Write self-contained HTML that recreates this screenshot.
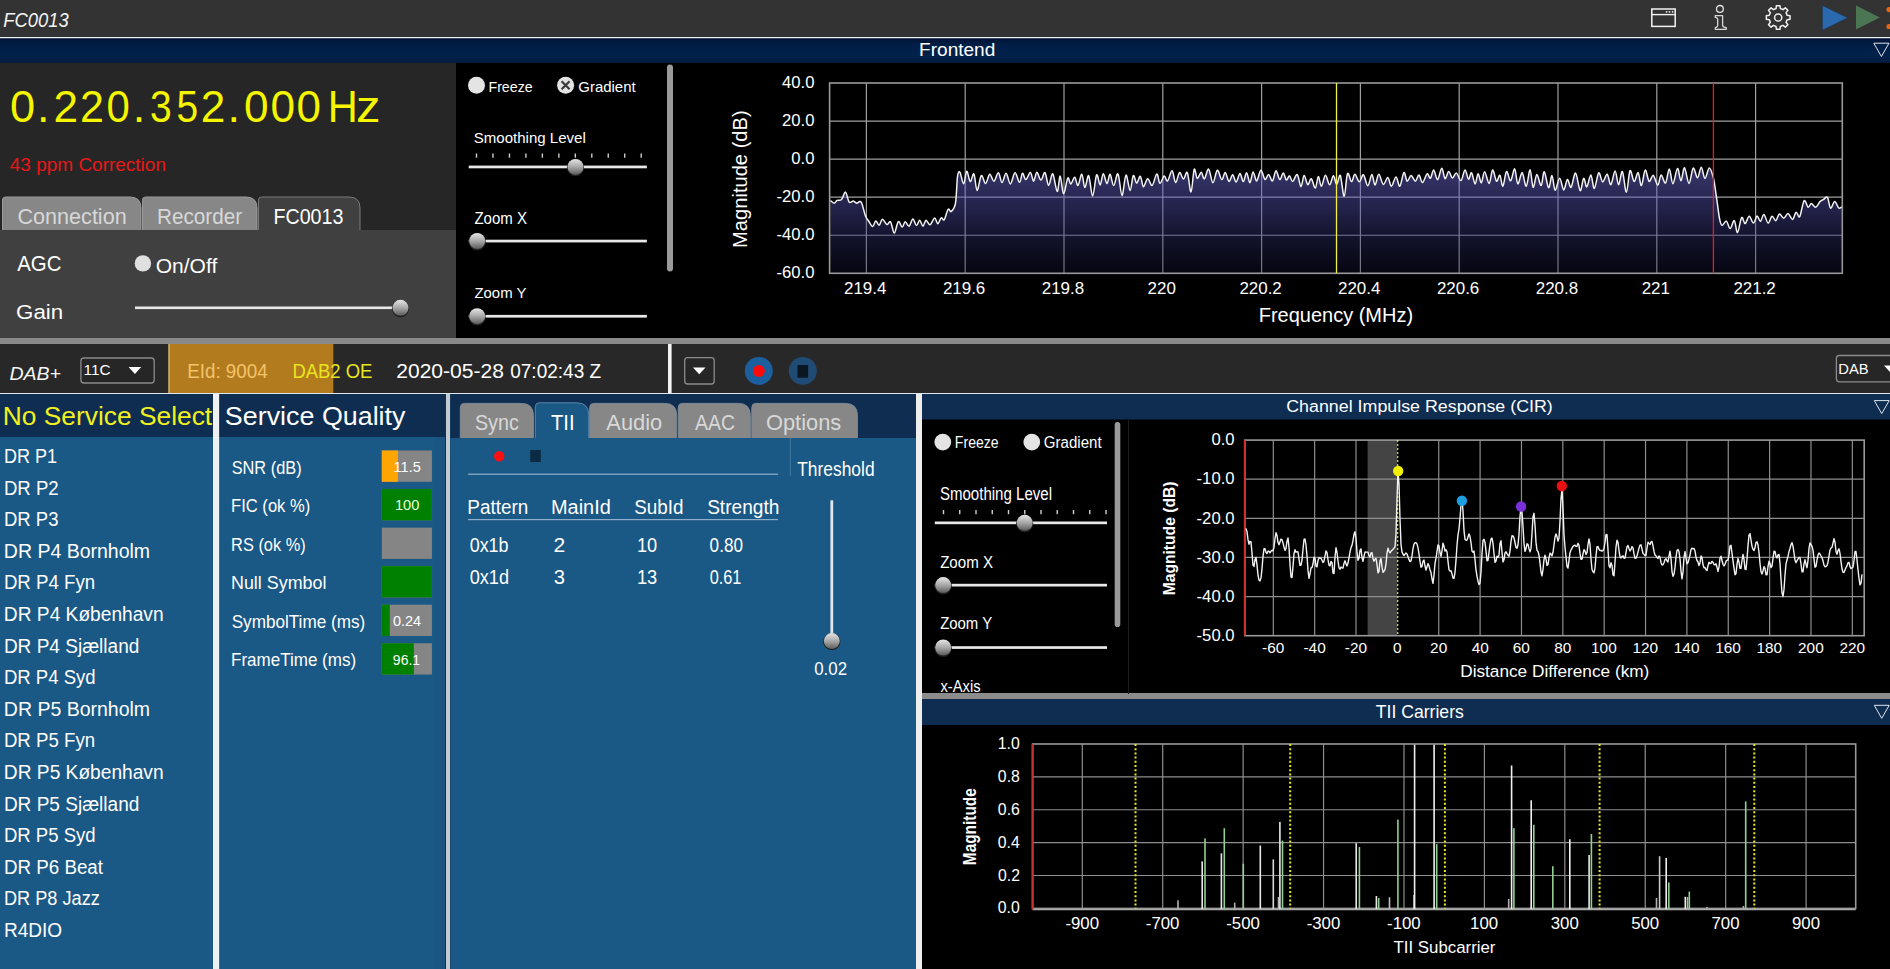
<!DOCTYPE html><html><head><meta charset="utf-8"><style>html,body{margin:0;padding:0;background:#000;overflow:hidden}svg{display:block}text{font-family:"Liberation Sans",sans-serif}</style></head><body><svg width="1890" height="969" viewBox="0 0 1890 969"><defs>
<linearGradient id="navy1" x1="0" y1="0" x2="0" y2="1"><stop offset="0" stop-color="#011536"/><stop offset="0.3" stop-color="#011f48"/><stop offset="0.8" stop-color="#01214b"/><stop offset="1" stop-color="#071a3a"/></linearGradient>
<linearGradient id="thumb" x1="0" y1="0" x2="0" y2="1"><stop offset="0" stop-color="#e6e6e6"/><stop offset="0.5" stop-color="#a8a8a8"/><stop offset="1" stop-color="#5a5a5a"/></linearGradient>
<linearGradient id="specfill" gradientUnits="userSpaceOnUse" x1="0" y1="172" x2="0" y2="273"><stop offset="0" stop-color="rgb(112,110,220)" stop-opacity="0.47"/><stop offset="0.35" stop-color="rgb(80,78,170)" stop-opacity="0.44"/><stop offset="1" stop-color="rgb(20,20,60)" stop-opacity="0.3"/></linearGradient>
</defs>
<rect x="0" y="0" width="1890" height="969" fill="#000"/>
<rect x="0" y="0" width="1890" height="37" fill="#333333"/>
<rect x="0" y="37" width="1890" height="1.5" fill="#e8f2fa"/>
<rect x="0" y="38.5" width="1890" height="24.5" fill="url(#navy1)"/>
<rect x="0" y="63" width="456" height="275" fill="#262626"/>
<rect x="456" y="63" width="1434" height="275" fill="#000"/>
<rect x="0" y="230" width="456" height="108" fill="#404040"/>
<rect x="0" y="338" width="1890" height="6" fill="#8a8a8a"/>
<rect x="0" y="344" width="1890" height="49" fill="#282828"/>
<rect x="0" y="393" width="1890" height="1.3" fill="#dfe8f0"/>
<rect x="0" y="394" width="213" height="575" fill="#1a5885"/>
<rect x="0" y="394" width="213" height="43" fill="#0f2d50"/>
<rect x="213" y="394" width="6.5" height="575" fill="#eef1f3"/>
<rect x="219.5" y="394" width="226" height="575" fill="#1a5885"/>
<rect x="219.5" y="394" width="226" height="43" fill="#0f2d50"/>
<rect x="435" y="437" width="10.5" height="532" fill="#1c5581"/>
<rect x="445.5" y="394" width="5" height="575" fill="#c2cad2"/>
<rect x="445" y="394" width="1" height="575" fill="#15304a"/>
<rect x="450" y="394" width="1" height="575" fill="#1a3a58"/>
<rect x="450.5" y="394" width="465.5" height="575" fill="#1a5885"/>
<rect x="450.5" y="394" width="465.5" height="44" fill="#0f2d50"/>
<rect x="916" y="394" width="6" height="575" fill="#eeeeec"/>
<rect x="922" y="394" width="968" height="300" fill="#000"/>
<rect x="922" y="394" width="968" height="25.5" fill="#0f2d50"/>
<rect x="922" y="693" width="968" height="6" fill="#8c8c8c"/>
<rect x="922" y="699" width="968" height="26" fill="#0f2d50"/>
<rect x="922" y="725" width="968" height="244" fill="#000"/>
<text x="3.15" y="26.80" font-size="19.71" fill="#f4f4f4" font-style="italic" textLength="65.49" lengthAdjust="spacingAndGlyphs">FC0013</text>
<rect x="1651.8" y="9" width="23.4" height="17.4" fill="none" stroke="#f2f2f2" stroke-width="1.5"/>
<line x1="1651.8" y1="14.6" x2="1675.2" y2="14.6" stroke="#f2f2f2" stroke-width="1.4"/>
<circle cx="1666.6" cy="11.8" r="0.9" fill="#f2f2f2"/>
<circle cx="1669.5" cy="11.8" r="0.9" fill="#f2f2f2"/>
<circle cx="1672.6" cy="11.8" r="0.9" fill="#f2f2f2"/>
<circle cx="1719.9" cy="8.9" r="3.4" fill="none" stroke="#e4e4e4" stroke-width="1.3"/>
<path d="M1715.3 15.6 L1722.6 15.6 L1722.6 25.4 Q1722.9 27.3 1726.3 27.7 L1726.3 29.3 L1715.3 29.3 L1715.3 27.7 Q1717.5 27.3 1717.7 25.4 L1717.7 19.2 Q1717.5 17.6 1715.3 17.4 Z" fill="none" stroke="#d8d8d8" stroke-width="1.3" stroke-linejoin="round"/>
<path d="M1776.41 5.63 L1779.99 5.63 L1780.39 8.56 L1783.01 9.66 L1785.32 7.84 L1787.86 10.38 L1786.07 12.73 L1787.15 15.35 L1790.07 15.71 L1790.07 19.29 L1787.14 19.69 L1786.04 22.31 L1787.86 24.62 L1785.32 27.16 L1782.97 25.37 L1780.35 26.45 L1779.99 29.37 L1776.41 29.37 L1776.01 26.44 L1773.39 25.34 L1771.08 27.16 L1768.54 24.62 L1770.33 22.27 L1769.25 19.65 L1766.33 19.29 L1766.33 15.71 L1769.26 15.31 L1770.36 12.69 L1768.54 10.38 L1771.08 7.84 L1773.43 9.63 L1776.05 8.55 Z" fill="none" stroke="#f0f0f0" stroke-width="1.5" stroke-linejoin="round"/>
<circle cx="1778.2" cy="17.5" r="3.6" fill="none" stroke="#f0f0f0" stroke-width="1.5"/>
<path d="M1822.4 5.4 L1847.8 17.8 L1822.4 30.2 Z" fill="#2a69ad" stroke="#1c3550" stroke-width="0.6"/>
<path d="M1856 5.6 L1879.8 17.6 L1856 29.6 Z" fill="#4c7653"/>
<circle cx="1889" cy="9.6" r="2.6" fill="#e2661a"/><circle cx="1889" cy="26.5" r="2.6" fill="#e2661a"/>
<text x="919.08" y="56.00" font-size="19.28" fill="#ffffff" textLength="76.21" lengthAdjust="spacingAndGlyphs">Frontend</text>
<path d="M1873.8 43.2 L1889 43.2 L1881.4 56.5 Z" fill="none" stroke="#e8eef4" stroke-width="0.95"/>
<text x="10.09" y="121.80" font-size="44.93" fill="#f5f500" textLength="25.14" lengthAdjust="spacingAndGlyphs">0</text>
<text x="36.96" y="121.80" font-size="44.93" fill="#f5f500">.</text>
<text x="53.59" y="121.80" font-size="44.93" fill="#f5f500" textLength="24.57" lengthAdjust="spacingAndGlyphs">2</text>
<text x="80.05" y="121.80" font-size="44.93" fill="#f5f500" textLength="23.96" lengthAdjust="spacingAndGlyphs">2</text>
<text x="106.53" y="121.80" font-size="44.93" fill="#f5f500" textLength="23.29" lengthAdjust="spacingAndGlyphs">0</text>
<text x="132.66" y="121.80" font-size="44.93" fill="#f5f500">.</text>
<text x="150.04" y="121.80" font-size="44.93" fill="#f5f500" textLength="21.66" lengthAdjust="spacingAndGlyphs">3</text>
<text x="176.44" y="121.80" font-size="44.93" fill="#f5f500" textLength="21.66" lengthAdjust="spacingAndGlyphs">5</text>
<text x="200.69" y="121.80" font-size="44.93" fill="#f5f500" textLength="24.57" lengthAdjust="spacingAndGlyphs">2</text>
<text x="227.46" y="121.80" font-size="44.93" fill="#f5f500">.</text>
<text x="244.03" y="121.80" font-size="44.93" fill="#f5f500" textLength="24.56" lengthAdjust="spacingAndGlyphs">0</text>
<text x="270.43" y="121.80" font-size="44.93" fill="#f5f500" textLength="24.56" lengthAdjust="spacingAndGlyphs">0</text>
<text x="296.44" y="121.80" font-size="44.93" fill="#f5f500" textLength="24.45" lengthAdjust="spacingAndGlyphs">0</text>
<text x="327.67" y="121.80" font-size="44.93" fill="#f5f500" textLength="30.05" lengthAdjust="spacingAndGlyphs">H</text>
<text x="356.04" y="121.80" font-size="44.93" fill="#f5f500" textLength="24.51" lengthAdjust="spacingAndGlyphs">z</text>
<text x="9.82" y="171.00" font-size="17.54" fill="#e81818" textLength="156.14" lengthAdjust="spacingAndGlyphs">43 ppm Correction</text>
<path d="M2.5 231 L2.5 200 Q2.5 197 5.5 197 L130 197 Q141 197 141 208 L141 231 Z" fill="#878787" stroke="#9a9a9a" stroke-width="1"/>
<path d="M142.5 231 L142.5 200 Q142.5 197 145.5 197 L246 197 Q257 197 257 208 L257 231 Z" fill="#878787" stroke="#9a9a9a" stroke-width="1"/>
<path d="M258.5 231 L258.5 200 Q258.5 197 261.5 197 L349 197 Q360 197 360 208 L360 231 Z" fill="#404040" stroke="#7a7a7a" stroke-width="1"/>
<rect x="0" y="230" width="456" height="108" fill="#404040"/>
<text x="17.52" y="224.30" font-size="22.75" fill="#d8d8d8" textLength="109.16" lengthAdjust="spacingAndGlyphs">Connection</text>
<text x="156.94" y="224.30" font-size="22.75" fill="#d8d8d8" textLength="85.23" lengthAdjust="spacingAndGlyphs">Recorder</text>
<text x="273.43" y="224.30" font-size="22.75" fill="#ffffff" textLength="70.02" lengthAdjust="spacingAndGlyphs">FC0013</text>
<text x="17.20" y="271.20" font-size="21.16" fill="#ffffff" textLength="44.26" lengthAdjust="spacingAndGlyphs">AGC</text>
<circle cx="142.9" cy="263.4" r="8.2" fill="#e0e0e0"/>
<text x="155.65" y="272.60" font-size="20.43" fill="#ffffff" textLength="61.59" lengthAdjust="spacingAndGlyphs">On/Off</text>
<text x="16.08" y="319.20" font-size="19.86" fill="#ffffff" textLength="47.12" lengthAdjust="spacingAndGlyphs">Gain</text>
<rect x="135" y="306.5" width="266" height="2.6" fill="#e8e8e8"/>
<circle cx="400.5" cy="308.6" r="8.6" fill="#202020"/>
<circle cx="400.5" cy="307.8" r="8" fill="url(#thumb)"/>
<circle cx="476.5" cy="85.3" r="8.5" fill="#e4e4e4"/>
<text x="488.46" y="92.00" font-size="15.36" fill="#ffffff" textLength="44.21" lengthAdjust="spacingAndGlyphs">Freeze</text>
<circle cx="565.6" cy="85.3" r="8.5" fill="#e4e4e4"/>
<path d="M561.6 81.3 L569.6 89.3 M569.6 81.3 L561.6 89.3" stroke="#3c3c3c" stroke-width="2.2"/>
<text x="578.25" y="92.00" font-size="15.36" fill="#ffffff" textLength="57.43" lengthAdjust="spacingAndGlyphs">Gradient</text>
<text x="473.72" y="142.90" font-size="15.36" fill="#ffffff" textLength="112.02" lengthAdjust="spacingAndGlyphs">Smoothing Level</text>
<rect x="475.8" y="153.5" width="1.4" height="4.2" fill="#cfcfcf"/>
<rect x="492.27000000000004" y="153.5" width="1.4" height="4.2" fill="#cfcfcf"/>
<rect x="508.74" y="153.5" width="1.4" height="4.2" fill="#cfcfcf"/>
<rect x="525.2099999999999" y="153.5" width="1.4" height="4.2" fill="#cfcfcf"/>
<rect x="541.68" y="153.5" width="1.4" height="4.2" fill="#cfcfcf"/>
<rect x="558.15" y="153.5" width="1.4" height="4.2" fill="#cfcfcf"/>
<rect x="574.62" y="153.5" width="1.4" height="4.2" fill="#cfcfcf"/>
<rect x="591.09" y="153.5" width="1.4" height="4.2" fill="#cfcfcf"/>
<rect x="607.56" y="153.5" width="1.4" height="4.2" fill="#cfcfcf"/>
<rect x="624.03" y="153.5" width="1.4" height="4.2" fill="#cfcfcf"/>
<rect x="640.5" y="153.5" width="1.4" height="4.2" fill="#cfcfcf"/>
<rect x="468.7" y="165.6" width="178.2" height="2.7" fill="#e8e8e8"/>
<circle cx="575.5" cy="167.70000000000002" r="8.6" fill="#202020"/>
<circle cx="575.5" cy="166.9" r="8" fill="url(#thumb)"/>
<text x="474.45" y="223.50" font-size="16.23" fill="#ffffff" textLength="52.57" lengthAdjust="spacingAndGlyphs">Zoom X</text>
<rect x="468.7" y="239.7" width="178.2" height="2.7" fill="#e8e8e8"/>
<circle cx="477.2" cy="241.8" r="8.6" fill="#202020"/>
<circle cx="477.2" cy="241" r="8" fill="url(#thumb)"/>
<text x="474.45" y="298.00" font-size="15.36" fill="#ffffff" textLength="51.99" lengthAdjust="spacingAndGlyphs">Zoom Y</text>
<rect x="468.7" y="314.9" width="178.2" height="2.7" fill="#e8e8e8"/>
<circle cx="477.2" cy="317.0" r="8.6" fill="#202020"/>
<circle cx="477.2" cy="316.2" r="8" fill="url(#thumb)"/>
<rect x="667" y="64.5" width="6" height="207" rx="3" fill="#9a9a9a"/>
<line x1="866.4" y1="83" x2="866.4" y2="273.3" stroke="#a0a0a0" stroke-width="1.2"/>
<line x1="965.1999999999999" y1="83" x2="965.1999999999999" y2="273.3" stroke="#a0a0a0" stroke-width="1.2"/>
<line x1="1064.0" y1="83" x2="1064.0" y2="273.3" stroke="#a0a0a0" stroke-width="1.2"/>
<line x1="1162.8" y1="83" x2="1162.8" y2="273.3" stroke="#a0a0a0" stroke-width="1.2"/>
<line x1="1261.6" y1="83" x2="1261.6" y2="273.3" stroke="#a0a0a0" stroke-width="1.2"/>
<line x1="1360.4" y1="83" x2="1360.4" y2="273.3" stroke="#a0a0a0" stroke-width="1.2"/>
<line x1="1459.1999999999998" y1="83" x2="1459.1999999999998" y2="273.3" stroke="#a0a0a0" stroke-width="1.2"/>
<line x1="1558.0" y1="83" x2="1558.0" y2="273.3" stroke="#a0a0a0" stroke-width="1.2"/>
<line x1="1656.8" y1="83" x2="1656.8" y2="273.3" stroke="#a0a0a0" stroke-width="1.2"/>
<line x1="1755.6" y1="83" x2="1755.6" y2="273.3" stroke="#a0a0a0" stroke-width="1.2"/>
<line x1="829.6" y1="121.06" x2="1842.3" y2="121.06" stroke="#a0a0a0" stroke-width="1.2"/>
<line x1="829.6" y1="159.12" x2="1842.3" y2="159.12" stroke="#a0a0a0" stroke-width="1.2"/>
<line x1="829.6" y1="197.18" x2="1842.3" y2="197.18" stroke="#a0a0a0" stroke-width="1.2"/>
<line x1="829.6" y1="235.24" x2="1842.3" y2="235.24" stroke="#a0a0a0" stroke-width="1.2"/>
<path d="M830.5 200.6 C831.1 201.0 833.0 203.3 834.1 203.2 C835.2 203.2 835.9 201.1 837.1 200.4 C838.3 199.8 840.1 200.9 841.5 199.5 C842.9 198.1 844.3 191.7 845.5 192.1 C846.8 192.5 847.8 200.5 849.1 202.0 C850.4 203.5 852.0 200.9 853.3 201.1 C854.6 201.3 855.4 203.0 856.7 203.2 C858.0 203.4 859.7 200.0 861.2 202.1 C862.6 204.2 864.2 212.7 865.4 215.8 C866.6 219.0 867.4 219.3 868.6 221.0 C869.8 222.8 871.4 226.6 872.6 226.6 C873.8 226.6 874.7 221.3 875.8 221.1 C876.9 220.9 878.0 225.5 879.1 225.2 C880.2 224.9 881.1 219.3 882.4 219.2 C883.7 219.1 885.5 224.1 886.8 224.5 C888.2 225.0 889.4 220.4 890.6 221.9 C891.9 223.3 893.0 233.1 894.3 233.1 C895.6 233.0 896.9 222.6 898.3 221.6 C899.6 220.6 901.0 227.1 902.2 227.1 C903.3 227.1 904.1 221.8 905.2 221.7 C906.3 221.6 907.8 226.8 909.1 226.3 C910.3 225.9 911.6 219.3 912.9 219.1 C914.1 219.0 915.4 225.4 916.5 225.6 C917.7 225.8 918.6 220.1 919.7 220.2 C920.8 220.3 921.9 226.2 923.0 226.2 C924.0 226.2 924.9 220.5 926.0 220.2 C927.2 220.0 928.6 225.2 930.0 224.8 C931.4 224.5 933.3 218.3 934.6 218.1 C935.9 217.9 936.7 223.7 937.8 223.7 C938.9 223.6 940.1 218.4 941.2 217.8 C942.3 217.1 943.1 221.1 944.2 219.7 C945.4 218.3 947.0 210.6 948.2 209.3 C949.4 207.9 950.1 212.6 951.3 211.5 C952.5 210.5 954.5 209.0 955.5 203.2 C956.5 197.3 956.8 181.6 957.5 176.5 C958.2 171.4 959.0 171.2 960.0 172.4 C961.0 173.7 962.5 184.0 963.6 183.8 C964.8 183.6 965.6 171.6 966.7 171.2 C967.8 170.8 969.0 181.0 970.2 181.5 C971.4 182.0 972.8 172.5 973.9 174.0 C975.1 175.5 975.8 190.1 977.1 190.4 C978.3 190.7 979.9 176.7 981.3 175.6 C982.7 174.5 984.2 183.8 985.6 183.6 C987.0 183.4 988.3 174.6 989.7 174.2 C991.1 173.8 992.4 181.4 993.9 181.2 C995.3 181.0 997.1 172.5 998.4 172.8 C999.8 173.0 1000.7 182.6 1002.0 182.6 C1003.3 182.7 1004.7 173.0 1006.1 173.2 C1007.5 173.4 1008.9 184.0 1010.4 183.9 C1011.9 183.8 1013.5 172.9 1015.0 172.7 C1016.5 172.4 1018.2 182.2 1019.5 182.3 C1020.8 182.4 1021.5 173.7 1022.5 173.3 C1023.6 172.8 1024.5 179.8 1025.9 179.6 C1027.2 179.5 1029.1 172.1 1030.4 172.4 C1031.7 172.7 1032.6 181.3 1033.6 181.3 C1034.7 181.3 1035.6 172.5 1036.8 172.3 C1038.0 172.1 1039.5 179.9 1040.9 180.0 C1042.3 180.1 1043.7 171.7 1045.0 172.6 C1046.3 173.6 1047.3 185.2 1048.6 185.4 C1049.9 185.6 1051.3 172.9 1052.8 173.9 C1054.2 174.9 1055.9 191.0 1057.2 191.4 C1058.4 191.8 1059.2 175.7 1060.2 176.1 C1061.3 176.5 1062.3 193.4 1063.5 193.7 C1064.8 194.0 1066.6 179.7 1067.8 178.1 C1069.0 176.5 1069.6 184.2 1070.8 184.1 C1071.9 184.0 1073.5 177.1 1074.7 177.3 C1075.9 177.5 1076.8 185.9 1078.0 185.4 C1079.2 184.9 1080.7 173.8 1081.8 174.2 C1083.0 174.5 1083.7 187.2 1084.9 187.5 C1086.0 187.7 1087.5 174.2 1088.7 175.7 C1090.0 177.1 1091.3 196.2 1092.6 196.1 C1093.9 196.0 1095.4 176.8 1096.6 174.9 C1097.9 173.1 1099.0 185.1 1100.1 185.0 C1101.2 184.8 1102.1 174.0 1103.3 173.8 C1104.4 173.6 1105.9 183.5 1107.0 183.6 C1108.1 183.7 1109.0 173.9 1110.1 174.2 C1111.2 174.6 1112.4 185.7 1113.7 185.6 C1115.0 185.6 1116.6 172.3 1118.0 173.9 C1119.4 175.6 1120.7 195.4 1122.0 195.6 C1123.3 195.8 1124.6 175.9 1126.0 175.1 C1127.3 174.2 1128.8 190.3 1130.0 190.4 C1131.3 190.5 1132.2 176.8 1133.3 175.6 C1134.4 174.4 1135.5 183.0 1136.6 183.1 C1137.8 183.2 1139.2 175.7 1140.4 176.3 C1141.5 176.9 1142.2 186.3 1143.4 186.8 C1144.6 187.2 1146.2 179.0 1147.7 178.8 C1149.1 178.6 1150.7 186.2 1152.2 185.4 C1153.7 184.6 1155.5 174.3 1156.8 173.9 C1158.1 173.6 1158.7 183.0 1160.0 183.3 C1161.2 183.7 1162.9 176.4 1164.2 176.0 C1165.5 175.6 1166.2 181.8 1167.6 180.9 C1168.9 180.0 1170.7 170.5 1172.1 170.8 C1173.4 171.1 1174.4 182.3 1175.6 182.6 C1176.9 182.9 1178.2 173.2 1179.5 172.6 C1180.8 172.0 1182.2 179.1 1183.5 179.0 C1184.8 179.0 1186.1 170.4 1187.3 172.6 C1188.6 174.7 1189.9 192.5 1191.0 191.9 C1192.2 191.4 1193.2 171.5 1194.2 169.3 C1195.2 167.0 1196.1 178.0 1197.3 178.5 C1198.5 179.0 1200.1 172.2 1201.3 172.3 C1202.4 172.4 1203.1 179.4 1204.4 178.9 C1205.6 178.4 1207.2 168.5 1208.6 169.1 C1210.1 169.8 1211.4 182.6 1212.9 182.8 C1214.3 183.0 1215.8 170.8 1217.3 170.2 C1218.8 169.7 1220.5 179.3 1221.8 179.6 C1223.2 180.0 1224.0 172.2 1225.2 172.5 C1226.4 172.8 1227.8 181.0 1229.0 181.4 C1230.3 181.8 1231.5 174.7 1232.7 174.8 C1233.8 174.9 1234.9 182.3 1236.1 182.1 C1237.3 181.9 1238.8 173.7 1240.0 173.6 C1241.2 173.5 1242.2 181.7 1243.3 181.6 C1244.4 181.5 1245.5 172.6 1246.6 172.8 C1247.7 173.0 1248.8 182.9 1249.9 182.7 C1251.0 182.6 1252.0 172.2 1253.1 171.9 C1254.2 171.7 1255.4 181.3 1256.6 181.0 C1257.9 180.7 1259.5 170.5 1260.9 170.2 C1262.3 170.0 1263.8 178.8 1265.0 179.5 C1266.3 180.2 1267.3 174.1 1268.6 174.4 C1269.8 174.6 1271.2 181.5 1272.5 180.9 C1273.7 180.2 1274.8 170.9 1276.0 170.7 C1277.2 170.4 1278.6 179.2 1279.8 179.6 C1281.0 179.9 1282.2 172.8 1283.3 172.9 C1284.4 173.0 1285.3 179.5 1286.4 180.0 C1287.4 180.5 1288.4 175.5 1289.4 175.7 C1290.5 176.0 1291.4 181.6 1292.7 181.4 C1294.0 181.2 1295.9 173.7 1297.3 174.6 C1298.7 175.5 1299.8 186.6 1300.9 186.7 C1302.1 186.9 1303.0 175.8 1304.1 175.4 C1305.3 175.1 1306.5 184.0 1307.7 184.6 C1308.9 185.1 1310.1 178.1 1311.3 178.7 C1312.6 179.3 1314.1 188.5 1315.3 188.1 C1316.5 187.8 1317.3 176.9 1318.3 176.6 C1319.3 176.3 1320.2 186.5 1321.4 186.3 C1322.5 186.1 1324.1 175.5 1325.4 175.3 C1326.8 175.1 1328.3 184.7 1329.6 184.8 C1331.0 184.9 1332.2 175.9 1333.4 175.8 C1334.6 175.7 1335.6 184.4 1336.7 184.4 C1337.9 184.3 1339.1 173.4 1340.3 175.4 C1341.5 177.4 1343.0 196.6 1344.2 196.3 C1345.4 196.1 1346.2 176.2 1347.5 173.7 C1348.7 171.3 1350.3 181.5 1351.5 181.6 C1352.8 181.7 1353.6 174.3 1354.9 174.3 C1356.2 174.3 1357.9 181.8 1359.3 181.8 C1360.7 181.9 1362.0 174.0 1363.4 174.7 C1364.8 175.3 1366.4 185.8 1367.8 185.8 C1369.2 185.7 1370.7 174.7 1371.9 174.6 C1373.1 174.5 1373.9 185.2 1375.0 185.1 C1376.2 185.1 1377.4 174.4 1378.8 174.3 C1380.1 174.1 1381.8 183.8 1383.3 184.4 C1384.8 184.9 1386.5 177.1 1387.8 177.4 C1389.2 177.7 1390.1 186.3 1391.4 186.3 C1392.8 186.2 1394.6 176.9 1396.0 176.9 C1397.4 176.9 1398.5 187.0 1399.8 186.2 C1401.1 185.5 1402.7 173.4 1403.9 172.5 C1405.1 171.7 1406.0 180.7 1407.2 181.2 C1408.4 181.7 1409.7 175.5 1411.1 175.5 C1412.5 175.5 1414.1 181.3 1415.4 181.2 C1416.7 181.1 1417.7 174.9 1418.9 175.1 C1420.1 175.3 1421.2 182.7 1422.5 182.5 C1423.9 182.3 1425.8 174.5 1427.1 173.8 C1428.4 173.1 1429.3 178.9 1430.4 178.2 C1431.5 177.6 1432.5 169.7 1433.7 169.9 C1434.9 170.2 1436.2 180.0 1437.5 179.7 C1438.9 179.5 1440.5 168.4 1441.8 168.2 C1443.0 168.0 1443.9 178.0 1445.0 178.6 C1446.2 179.1 1447.4 171.6 1448.7 171.5 C1449.9 171.4 1451.1 177.7 1452.4 178.0 C1453.7 178.2 1455.0 172.6 1456.5 173.1 C1457.9 173.5 1459.6 181.1 1461.0 180.6 C1462.4 180.1 1463.7 170.1 1465.0 169.9 C1466.2 169.6 1467.4 178.6 1468.5 179.1 C1469.6 179.6 1470.5 172.0 1471.6 172.8 C1472.7 173.6 1474.0 183.8 1475.1 184.0 C1476.2 184.1 1477.1 174.0 1478.1 173.8 C1479.2 173.6 1480.3 183.2 1481.3 182.9 C1482.4 182.5 1483.3 171.6 1484.6 171.7 C1485.9 171.8 1487.8 183.8 1489.1 183.5 C1490.5 183.2 1491.4 170.4 1492.6 170.0 C1493.9 169.6 1495.3 180.3 1496.5 181.2 C1497.7 182.1 1498.8 174.5 1499.9 175.3 C1500.9 176.2 1501.8 186.7 1502.9 186.1 C1504.0 185.5 1505.2 172.6 1506.5 171.7 C1507.8 170.8 1509.2 181.2 1510.6 180.8 C1512.0 180.3 1513.5 168.4 1514.7 168.9 C1515.9 169.4 1516.6 183.2 1517.8 183.8 C1519.1 184.5 1520.8 172.3 1522.2 172.7 C1523.6 173.1 1524.9 186.7 1526.2 186.2 C1527.6 185.7 1528.9 169.6 1530.1 169.8 C1531.2 170.0 1532.0 186.6 1533.1 187.3 C1534.3 188.1 1535.5 174.8 1536.9 174.5 C1538.2 174.2 1539.9 186.0 1541.1 185.6 C1542.4 185.1 1543.0 171.4 1544.3 171.7 C1545.5 172.1 1547.3 187.0 1548.6 187.7 C1549.9 188.3 1550.9 175.2 1552.0 175.6 C1553.1 176.1 1553.9 189.9 1555.1 190.3 C1556.4 190.7 1558.2 178.2 1559.7 178.2 C1561.1 178.1 1562.4 189.7 1563.7 189.9 C1565.0 190.1 1566.1 180.0 1567.4 179.5 C1568.6 179.1 1569.7 188.3 1571.1 187.3 C1572.4 186.2 1574.1 172.5 1575.6 173.1 C1577.1 173.7 1578.8 189.8 1580.2 190.6 C1581.5 191.5 1582.5 179.0 1583.7 178.4 C1584.8 177.7 1585.7 187.5 1586.8 186.9 C1588.0 186.3 1589.6 174.7 1590.8 174.9 C1592.1 175.2 1593.0 188.7 1594.3 188.4 C1595.6 188.0 1597.3 174.0 1598.7 172.9 C1600.1 171.9 1601.3 181.8 1602.7 182.0 C1604.1 182.2 1605.8 173.8 1607.2 174.2 C1608.5 174.7 1609.6 185.3 1610.9 184.7 C1612.2 184.2 1613.8 171.0 1615.1 171.1 C1616.4 171.1 1617.4 184.8 1618.6 184.8 C1619.8 184.9 1621.1 170.3 1622.4 171.5 C1623.7 172.8 1625.1 192.5 1626.4 192.3 C1627.7 192.2 1628.7 172.5 1630.0 170.7 C1631.3 168.9 1632.8 181.3 1634.2 181.6 C1635.5 181.9 1636.9 172.0 1638.1 172.7 C1639.3 173.3 1640.2 186.0 1641.4 185.5 C1642.6 185.1 1643.9 170.8 1645.2 170.1 C1646.5 169.4 1647.8 180.5 1649.1 181.3 C1650.5 182.2 1651.8 174.7 1653.3 175.3 C1654.7 176.0 1656.5 185.2 1657.8 185.2 C1659.1 185.1 1659.8 175.4 1661.1 175.1 C1662.4 174.7 1664.1 184.0 1665.5 183.0 C1666.9 182.0 1668.1 168.9 1669.3 169.0 C1670.6 169.1 1671.5 183.8 1672.9 183.7 C1674.3 183.6 1676.1 168.9 1677.5 168.4 C1678.8 168.0 1679.8 180.9 1681.0 180.8 C1682.2 180.7 1683.2 167.3 1684.5 167.8 C1685.8 168.2 1687.5 183.4 1689.0 183.5 C1690.4 183.5 1691.8 169.1 1693.2 168.2 C1694.7 167.2 1696.2 178.0 1697.5 177.9 C1698.9 177.8 1700.0 167.2 1701.3 167.3 C1702.5 167.4 1703.6 178.3 1705.0 178.4 C1706.3 178.5 1707.9 167.9 1709.3 167.9 C1710.7 167.9 1712.3 173.5 1713.5 178.4 C1714.7 183.4 1715.5 190.8 1716.5 197.5 C1717.5 204.1 1718.6 213.7 1719.5 218.4 C1720.4 223.1 1720.9 225.0 1722.0 225.4 C1723.1 225.9 1725.0 220.6 1726.4 221.1 C1727.7 221.6 1728.8 228.6 1730.2 228.5 C1731.5 228.4 1733.1 219.9 1734.3 220.6 C1735.6 221.3 1736.2 233.1 1737.5 232.6 C1738.7 232.1 1740.4 219.1 1741.7 217.6 C1743.0 216.1 1743.8 223.9 1745.1 223.6 C1746.3 223.4 1747.8 216.3 1749.2 216.2 C1750.6 216.1 1752.1 223.0 1753.4 223.0 C1754.7 223.0 1755.9 216.4 1757.1 216.1 C1758.2 215.8 1759.4 221.7 1760.5 221.4 C1761.6 221.1 1762.6 214.1 1763.9 214.4 C1765.2 214.7 1766.7 222.8 1768.1 223.1 C1769.4 223.4 1770.7 216.6 1772.0 216.2 C1773.3 215.8 1774.6 221.1 1775.8 220.7 C1777.1 220.3 1778.1 214.4 1779.4 214.0 C1780.8 213.6 1782.3 218.3 1783.7 218.2 C1785.2 218.2 1786.6 213.4 1788.0 213.6 C1789.5 213.7 1791.2 219.6 1792.5 219.4 C1793.9 219.2 1794.9 212.7 1796.1 212.3 C1797.3 211.8 1798.4 218.5 1799.7 216.6 C1801.0 214.7 1802.7 202.3 1804.1 200.7 C1805.5 199.2 1806.9 206.7 1808.1 207.2 C1809.3 207.7 1810.1 203.6 1811.4 203.6 C1812.6 203.6 1814.2 207.5 1815.7 207.2 C1817.1 206.9 1818.7 202.9 1820.0 201.6 C1821.2 200.4 1822.1 200.4 1823.3 199.6 C1824.6 198.9 1826.2 195.9 1827.4 197.3 C1828.6 198.7 1829.3 207.3 1830.6 208.1 C1831.8 208.8 1833.3 201.5 1834.7 201.5 C1836.0 201.5 1837.5 207.0 1838.6 207.9 C1839.8 208.8 1841.2 207.1 1841.7 207.0 L1841.7 273.3 L830.5 273.3 Z" fill="url(#specfill)"/>
<rect x="829.6" y="83" width="1012.6999999999999" height="190.3" fill="none" stroke="#999" stroke-width="1.6"/>
<path d="M830.5 200.6 C831.1 201.0 833.0 203.3 834.1 203.2 C835.2 203.2 835.9 201.1 837.1 200.4 C838.3 199.8 840.1 200.9 841.5 199.5 C842.9 198.1 844.3 191.7 845.5 192.1 C846.8 192.5 847.8 200.5 849.1 202.0 C850.4 203.5 852.0 200.9 853.3 201.1 C854.6 201.3 855.4 203.0 856.7 203.2 C858.0 203.4 859.7 200.0 861.2 202.1 C862.6 204.2 864.2 212.7 865.4 215.8 C866.6 219.0 867.4 219.3 868.6 221.0 C869.8 222.8 871.4 226.6 872.6 226.6 C873.8 226.6 874.7 221.3 875.8 221.1 C876.9 220.9 878.0 225.5 879.1 225.2 C880.2 224.9 881.1 219.3 882.4 219.2 C883.7 219.1 885.5 224.1 886.8 224.5 C888.2 225.0 889.4 220.4 890.6 221.9 C891.9 223.3 893.0 233.1 894.3 233.1 C895.6 233.0 896.9 222.6 898.3 221.6 C899.6 220.6 901.0 227.1 902.2 227.1 C903.3 227.1 904.1 221.8 905.2 221.7 C906.3 221.6 907.8 226.8 909.1 226.3 C910.3 225.9 911.6 219.3 912.9 219.1 C914.1 219.0 915.4 225.4 916.5 225.6 C917.7 225.8 918.6 220.1 919.7 220.2 C920.8 220.3 921.9 226.2 923.0 226.2 C924.0 226.2 924.9 220.5 926.0 220.2 C927.2 220.0 928.6 225.2 930.0 224.8 C931.4 224.5 933.3 218.3 934.6 218.1 C935.9 217.9 936.7 223.7 937.8 223.7 C938.9 223.6 940.1 218.4 941.2 217.8 C942.3 217.1 943.1 221.1 944.2 219.7 C945.4 218.3 947.0 210.6 948.2 209.3 C949.4 207.9 950.1 212.6 951.3 211.5 C952.5 210.5 954.5 209.0 955.5 203.2 C956.5 197.3 956.8 181.6 957.5 176.5 C958.2 171.4 959.0 171.2 960.0 172.4 C961.0 173.7 962.5 184.0 963.6 183.8 C964.8 183.6 965.6 171.6 966.7 171.2 C967.8 170.8 969.0 181.0 970.2 181.5 C971.4 182.0 972.8 172.5 973.9 174.0 C975.1 175.5 975.8 190.1 977.1 190.4 C978.3 190.7 979.9 176.7 981.3 175.6 C982.7 174.5 984.2 183.8 985.6 183.6 C987.0 183.4 988.3 174.6 989.7 174.2 C991.1 173.8 992.4 181.4 993.9 181.2 C995.3 181.0 997.1 172.5 998.4 172.8 C999.8 173.0 1000.7 182.6 1002.0 182.6 C1003.3 182.7 1004.7 173.0 1006.1 173.2 C1007.5 173.4 1008.9 184.0 1010.4 183.9 C1011.9 183.8 1013.5 172.9 1015.0 172.7 C1016.5 172.4 1018.2 182.2 1019.5 182.3 C1020.8 182.4 1021.5 173.7 1022.5 173.3 C1023.6 172.8 1024.5 179.8 1025.9 179.6 C1027.2 179.5 1029.1 172.1 1030.4 172.4 C1031.7 172.7 1032.6 181.3 1033.6 181.3 C1034.7 181.3 1035.6 172.5 1036.8 172.3 C1038.0 172.1 1039.5 179.9 1040.9 180.0 C1042.3 180.1 1043.7 171.7 1045.0 172.6 C1046.3 173.6 1047.3 185.2 1048.6 185.4 C1049.9 185.6 1051.3 172.9 1052.8 173.9 C1054.2 174.9 1055.9 191.0 1057.2 191.4 C1058.4 191.8 1059.2 175.7 1060.2 176.1 C1061.3 176.5 1062.3 193.4 1063.5 193.7 C1064.8 194.0 1066.6 179.7 1067.8 178.1 C1069.0 176.5 1069.6 184.2 1070.8 184.1 C1071.9 184.0 1073.5 177.1 1074.7 177.3 C1075.9 177.5 1076.8 185.9 1078.0 185.4 C1079.2 184.9 1080.7 173.8 1081.8 174.2 C1083.0 174.5 1083.7 187.2 1084.9 187.5 C1086.0 187.7 1087.5 174.2 1088.7 175.7 C1090.0 177.1 1091.3 196.2 1092.6 196.1 C1093.9 196.0 1095.4 176.8 1096.6 174.9 C1097.9 173.1 1099.0 185.1 1100.1 185.0 C1101.2 184.8 1102.1 174.0 1103.3 173.8 C1104.4 173.6 1105.9 183.5 1107.0 183.6 C1108.1 183.7 1109.0 173.9 1110.1 174.2 C1111.2 174.6 1112.4 185.7 1113.7 185.6 C1115.0 185.6 1116.6 172.3 1118.0 173.9 C1119.4 175.6 1120.7 195.4 1122.0 195.6 C1123.3 195.8 1124.6 175.9 1126.0 175.1 C1127.3 174.2 1128.8 190.3 1130.0 190.4 C1131.3 190.5 1132.2 176.8 1133.3 175.6 C1134.4 174.4 1135.5 183.0 1136.6 183.1 C1137.8 183.2 1139.2 175.7 1140.4 176.3 C1141.5 176.9 1142.2 186.3 1143.4 186.8 C1144.6 187.2 1146.2 179.0 1147.7 178.8 C1149.1 178.6 1150.7 186.2 1152.2 185.4 C1153.7 184.6 1155.5 174.3 1156.8 173.9 C1158.1 173.6 1158.7 183.0 1160.0 183.3 C1161.2 183.7 1162.9 176.4 1164.2 176.0 C1165.5 175.6 1166.2 181.8 1167.6 180.9 C1168.9 180.0 1170.7 170.5 1172.1 170.8 C1173.4 171.1 1174.4 182.3 1175.6 182.6 C1176.9 182.9 1178.2 173.2 1179.5 172.6 C1180.8 172.0 1182.2 179.1 1183.5 179.0 C1184.8 179.0 1186.1 170.4 1187.3 172.6 C1188.6 174.7 1189.9 192.5 1191.0 191.9 C1192.2 191.4 1193.2 171.5 1194.2 169.3 C1195.2 167.0 1196.1 178.0 1197.3 178.5 C1198.5 179.0 1200.1 172.2 1201.3 172.3 C1202.4 172.4 1203.1 179.4 1204.4 178.9 C1205.6 178.4 1207.2 168.5 1208.6 169.1 C1210.1 169.8 1211.4 182.6 1212.9 182.8 C1214.3 183.0 1215.8 170.8 1217.3 170.2 C1218.8 169.7 1220.5 179.3 1221.8 179.6 C1223.2 180.0 1224.0 172.2 1225.2 172.5 C1226.4 172.8 1227.8 181.0 1229.0 181.4 C1230.3 181.8 1231.5 174.7 1232.7 174.8 C1233.8 174.9 1234.9 182.3 1236.1 182.1 C1237.3 181.9 1238.8 173.7 1240.0 173.6 C1241.2 173.5 1242.2 181.7 1243.3 181.6 C1244.4 181.5 1245.5 172.6 1246.6 172.8 C1247.7 173.0 1248.8 182.9 1249.9 182.7 C1251.0 182.6 1252.0 172.2 1253.1 171.9 C1254.2 171.7 1255.4 181.3 1256.6 181.0 C1257.9 180.7 1259.5 170.5 1260.9 170.2 C1262.3 170.0 1263.8 178.8 1265.0 179.5 C1266.3 180.2 1267.3 174.1 1268.6 174.4 C1269.8 174.6 1271.2 181.5 1272.5 180.9 C1273.7 180.2 1274.8 170.9 1276.0 170.7 C1277.2 170.4 1278.6 179.2 1279.8 179.6 C1281.0 179.9 1282.2 172.8 1283.3 172.9 C1284.4 173.0 1285.3 179.5 1286.4 180.0 C1287.4 180.5 1288.4 175.5 1289.4 175.7 C1290.5 176.0 1291.4 181.6 1292.7 181.4 C1294.0 181.2 1295.9 173.7 1297.3 174.6 C1298.7 175.5 1299.8 186.6 1300.9 186.7 C1302.1 186.9 1303.0 175.8 1304.1 175.4 C1305.3 175.1 1306.5 184.0 1307.7 184.6 C1308.9 185.1 1310.1 178.1 1311.3 178.7 C1312.6 179.3 1314.1 188.5 1315.3 188.1 C1316.5 187.8 1317.3 176.9 1318.3 176.6 C1319.3 176.3 1320.2 186.5 1321.4 186.3 C1322.5 186.1 1324.1 175.5 1325.4 175.3 C1326.8 175.1 1328.3 184.7 1329.6 184.8 C1331.0 184.9 1332.2 175.9 1333.4 175.8 C1334.6 175.7 1335.6 184.4 1336.7 184.4 C1337.9 184.3 1339.1 173.4 1340.3 175.4 C1341.5 177.4 1343.0 196.6 1344.2 196.3 C1345.4 196.1 1346.2 176.2 1347.5 173.7 C1348.7 171.3 1350.3 181.5 1351.5 181.6 C1352.8 181.7 1353.6 174.3 1354.9 174.3 C1356.2 174.3 1357.9 181.8 1359.3 181.8 C1360.7 181.9 1362.0 174.0 1363.4 174.7 C1364.8 175.3 1366.4 185.8 1367.8 185.8 C1369.2 185.7 1370.7 174.7 1371.9 174.6 C1373.1 174.5 1373.9 185.2 1375.0 185.1 C1376.2 185.1 1377.4 174.4 1378.8 174.3 C1380.1 174.1 1381.8 183.8 1383.3 184.4 C1384.8 184.9 1386.5 177.1 1387.8 177.4 C1389.2 177.7 1390.1 186.3 1391.4 186.3 C1392.8 186.2 1394.6 176.9 1396.0 176.9 C1397.4 176.9 1398.5 187.0 1399.8 186.2 C1401.1 185.5 1402.7 173.4 1403.9 172.5 C1405.1 171.7 1406.0 180.7 1407.2 181.2 C1408.4 181.7 1409.7 175.5 1411.1 175.5 C1412.5 175.5 1414.1 181.3 1415.4 181.2 C1416.7 181.1 1417.7 174.9 1418.9 175.1 C1420.1 175.3 1421.2 182.7 1422.5 182.5 C1423.9 182.3 1425.8 174.5 1427.1 173.8 C1428.4 173.1 1429.3 178.9 1430.4 178.2 C1431.5 177.6 1432.5 169.7 1433.7 169.9 C1434.9 170.2 1436.2 180.0 1437.5 179.7 C1438.9 179.5 1440.5 168.4 1441.8 168.2 C1443.0 168.0 1443.9 178.0 1445.0 178.6 C1446.2 179.1 1447.4 171.6 1448.7 171.5 C1449.9 171.4 1451.1 177.7 1452.4 178.0 C1453.7 178.2 1455.0 172.6 1456.5 173.1 C1457.9 173.5 1459.6 181.1 1461.0 180.6 C1462.4 180.1 1463.7 170.1 1465.0 169.9 C1466.2 169.6 1467.4 178.6 1468.5 179.1 C1469.6 179.6 1470.5 172.0 1471.6 172.8 C1472.7 173.6 1474.0 183.8 1475.1 184.0 C1476.2 184.1 1477.1 174.0 1478.1 173.8 C1479.2 173.6 1480.3 183.2 1481.3 182.9 C1482.4 182.5 1483.3 171.6 1484.6 171.7 C1485.9 171.8 1487.8 183.8 1489.1 183.5 C1490.5 183.2 1491.4 170.4 1492.6 170.0 C1493.9 169.6 1495.3 180.3 1496.5 181.2 C1497.7 182.1 1498.8 174.5 1499.9 175.3 C1500.9 176.2 1501.8 186.7 1502.9 186.1 C1504.0 185.5 1505.2 172.6 1506.5 171.7 C1507.8 170.8 1509.2 181.2 1510.6 180.8 C1512.0 180.3 1513.5 168.4 1514.7 168.9 C1515.9 169.4 1516.6 183.2 1517.8 183.8 C1519.1 184.5 1520.8 172.3 1522.2 172.7 C1523.6 173.1 1524.9 186.7 1526.2 186.2 C1527.6 185.7 1528.9 169.6 1530.1 169.8 C1531.2 170.0 1532.0 186.6 1533.1 187.3 C1534.3 188.1 1535.5 174.8 1536.9 174.5 C1538.2 174.2 1539.9 186.0 1541.1 185.6 C1542.4 185.1 1543.0 171.4 1544.3 171.7 C1545.5 172.1 1547.3 187.0 1548.6 187.7 C1549.9 188.3 1550.9 175.2 1552.0 175.6 C1553.1 176.1 1553.9 189.9 1555.1 190.3 C1556.4 190.7 1558.2 178.2 1559.7 178.2 C1561.1 178.1 1562.4 189.7 1563.7 189.9 C1565.0 190.1 1566.1 180.0 1567.4 179.5 C1568.6 179.1 1569.7 188.3 1571.1 187.3 C1572.4 186.2 1574.1 172.5 1575.6 173.1 C1577.1 173.7 1578.8 189.8 1580.2 190.6 C1581.5 191.5 1582.5 179.0 1583.7 178.4 C1584.8 177.7 1585.7 187.5 1586.8 186.9 C1588.0 186.3 1589.6 174.7 1590.8 174.9 C1592.1 175.2 1593.0 188.7 1594.3 188.4 C1595.6 188.0 1597.3 174.0 1598.7 172.9 C1600.1 171.9 1601.3 181.8 1602.7 182.0 C1604.1 182.2 1605.8 173.8 1607.2 174.2 C1608.5 174.7 1609.6 185.3 1610.9 184.7 C1612.2 184.2 1613.8 171.0 1615.1 171.1 C1616.4 171.1 1617.4 184.8 1618.6 184.8 C1619.8 184.9 1621.1 170.3 1622.4 171.5 C1623.7 172.8 1625.1 192.5 1626.4 192.3 C1627.7 192.2 1628.7 172.5 1630.0 170.7 C1631.3 168.9 1632.8 181.3 1634.2 181.6 C1635.5 181.9 1636.9 172.0 1638.1 172.7 C1639.3 173.3 1640.2 186.0 1641.4 185.5 C1642.6 185.1 1643.9 170.8 1645.2 170.1 C1646.5 169.4 1647.8 180.5 1649.1 181.3 C1650.5 182.2 1651.8 174.7 1653.3 175.3 C1654.7 176.0 1656.5 185.2 1657.8 185.2 C1659.1 185.1 1659.8 175.4 1661.1 175.1 C1662.4 174.7 1664.1 184.0 1665.5 183.0 C1666.9 182.0 1668.1 168.9 1669.3 169.0 C1670.6 169.1 1671.5 183.8 1672.9 183.7 C1674.3 183.6 1676.1 168.9 1677.5 168.4 C1678.8 168.0 1679.8 180.9 1681.0 180.8 C1682.2 180.7 1683.2 167.3 1684.5 167.8 C1685.8 168.2 1687.5 183.4 1689.0 183.5 C1690.4 183.5 1691.8 169.1 1693.2 168.2 C1694.7 167.2 1696.2 178.0 1697.5 177.9 C1698.9 177.8 1700.0 167.2 1701.3 167.3 C1702.5 167.4 1703.6 178.3 1705.0 178.4 C1706.3 178.5 1707.9 167.9 1709.3 167.9 C1710.7 167.9 1712.3 173.5 1713.5 178.4 C1714.7 183.4 1715.5 190.8 1716.5 197.5 C1717.5 204.1 1718.6 213.7 1719.5 218.4 C1720.4 223.1 1720.9 225.0 1722.0 225.4 C1723.1 225.9 1725.0 220.6 1726.4 221.1 C1727.7 221.6 1728.8 228.6 1730.2 228.5 C1731.5 228.4 1733.1 219.9 1734.3 220.6 C1735.6 221.3 1736.2 233.1 1737.5 232.6 C1738.7 232.1 1740.4 219.1 1741.7 217.6 C1743.0 216.1 1743.8 223.9 1745.1 223.6 C1746.3 223.4 1747.8 216.3 1749.2 216.2 C1750.6 216.1 1752.1 223.0 1753.4 223.0 C1754.7 223.0 1755.9 216.4 1757.1 216.1 C1758.2 215.8 1759.4 221.7 1760.5 221.4 C1761.6 221.1 1762.6 214.1 1763.9 214.4 C1765.2 214.7 1766.7 222.8 1768.1 223.1 C1769.4 223.4 1770.7 216.6 1772.0 216.2 C1773.3 215.8 1774.6 221.1 1775.8 220.7 C1777.1 220.3 1778.1 214.4 1779.4 214.0 C1780.8 213.6 1782.3 218.3 1783.7 218.2 C1785.2 218.2 1786.6 213.4 1788.0 213.6 C1789.5 213.7 1791.2 219.6 1792.5 219.4 C1793.9 219.2 1794.9 212.7 1796.1 212.3 C1797.3 211.8 1798.4 218.5 1799.7 216.6 C1801.0 214.7 1802.7 202.3 1804.1 200.7 C1805.5 199.2 1806.9 206.7 1808.1 207.2 C1809.3 207.7 1810.1 203.6 1811.4 203.6 C1812.6 203.6 1814.2 207.5 1815.7 207.2 C1817.1 206.9 1818.7 202.9 1820.0 201.6 C1821.2 200.4 1822.1 200.4 1823.3 199.6 C1824.6 198.9 1826.2 195.9 1827.4 197.3 C1828.6 198.7 1829.3 207.3 1830.6 208.1 C1831.8 208.8 1833.3 201.5 1834.7 201.5 C1836.0 201.5 1837.5 207.0 1838.6 207.9 C1839.8 208.8 1841.2 207.1 1841.7 207.0" fill="none" stroke="#f2f2f2" stroke-width="1.5" stroke-linejoin="round"/>
<line x1="1336.5" y1="83" x2="1336.5" y2="273.3" stroke="#f0f040" stroke-width="1.3"/>
<line x1="1713.4" y1="83" x2="1713.4" y2="273.3" stroke="#e02020" stroke-width="1.3"/>
<text x="782.07" y="87.90" font-size="16.67" fill="#ffffff">40.0</text>
<text x="782.07" y="125.96" font-size="16.67" fill="#ffffff">20.0</text>
<text x="791.32" y="164.02" font-size="16.67" fill="#ffffff">0.0</text>
<text x="776.48" y="202.08" font-size="16.67" fill="#ffffff">-20.0</text>
<text x="776.48" y="240.14" font-size="16.67" fill="#ffffff">-40.0</text>
<text x="776.48" y="278.20" font-size="16.67" fill="#ffffff">-60.0</text>
<text x="844.03" y="293.80" font-size="16.96" fill="#ffffff">219.4</text>
<text x="942.92" y="293.80" font-size="16.96" fill="#ffffff">219.6</text>
<text x="1041.72" y="293.80" font-size="16.96" fill="#ffffff">219.8</text>
<text x="1147.56" y="293.80" font-size="16.96" fill="#ffffff">220</text>
<text x="1239.40" y="293.80" font-size="16.96" fill="#ffffff">220.2</text>
<text x="1338.03" y="293.80" font-size="16.96" fill="#ffffff">220.4</text>
<text x="1436.92" y="293.80" font-size="16.96" fill="#ffffff">220.6</text>
<text x="1535.72" y="293.80" font-size="16.96" fill="#ffffff">220.8</text>
<text x="1641.64" y="293.80" font-size="16.96" fill="#ffffff">221</text>
<text x="1733.40" y="293.80" font-size="16.96" fill="#ffffff">221.2</text>
<text x="1258.70" y="321.90" font-size="20.72" fill="#ffffff" textLength="154.38" lengthAdjust="spacingAndGlyphs">Frequency (MHz)</text>
<g transform="rotate(-90)"><text x="-247.91" y="747.30" font-size="20.87" fill="#ffffff" textLength="137.56" lengthAdjust="spacingAndGlyphs">Magnitude (dB)</text></g>
<text x="9.41" y="379.70" font-size="19.13" fill="#f4f4f4" font-style="italic" textLength="51.57" lengthAdjust="spacingAndGlyphs">DAB+</text>
<rect x="80.9" y="358" width="73.3" height="25" rx="3" fill="#262626" stroke="#8a8a8a" stroke-width="1.3"/>
<text x="83.55" y="375.40" font-size="14.49" fill="#ffffff" textLength="26.99" lengthAdjust="spacingAndGlyphs">11C</text>
<path d="M128.6 367 L141.2 367 L134.9 373.9 Z" fill="#ffffff"/>
<rect x="168.5" y="344" width="164.8" height="49" fill="#b27c1e"/>
<rect x="168.5" y="344" width="1" height="49" fill="#e8c890"/>
<text x="187.20" y="377.70" font-size="19.42" fill="#f3c36a" textLength="80.49" lengthAdjust="spacingAndGlyphs">EId: 9004</text>
<text x="292.42" y="377.70" font-size="19.42" fill="#e9e41e" textLength="80.02" lengthAdjust="spacingAndGlyphs">DAB2 OE</text>
<text x="396.25" y="377.70" font-size="19.42" fill="#ffffff" textLength="107.60" lengthAdjust="spacingAndGlyphs">2020-05-28</text>
<text x="510.24" y="377.70" font-size="19.42" fill="#ffffff" textLength="90.86" lengthAdjust="spacingAndGlyphs">07:02:43 Z</text>
<rect x="668" y="344" width="3.6" height="49" fill="#f2f4f6"/>
<rect x="684.7" y="357.7" width="29.5" height="26.3" rx="3" fill="#262626" stroke="#8a8a8a" stroke-width="1.3"/>
<path d="M693 367.5 L705.5 367.5 L699.2 374.2 Z" fill="#ffffff"/>
<circle cx="758.8" cy="370.9" r="14" fill="#1b5f9e"/>
<circle cx="758.8" cy="370.9" r="6" fill="#ff0a0a"/>
<circle cx="802.8" cy="370.9" r="14" fill="#1f4b74"/>
<rect x="797.5" y="365" width="10.6" height="12.7" fill="#0a1622"/>
<rect x="1836.4" y="355.5" width="60" height="26.3" rx="3" fill="#262626" stroke="#8a8a8a" stroke-width="1.3"/>
<text x="1838.32" y="373.50" font-size="14.93" fill="#ffffff" textLength="30.34" lengthAdjust="spacingAndGlyphs">DAB</text>
<path d="M1884 365.5 L1896 365.5 L1890 372 Z" fill="#ffffff"/>
<svg x="0" y="394" width="213" height="50" overflow="hidden"><text x="2.69" y="30.70" font-size="25.36" fill="#f0f020" textLength="209.52" lengthAdjust="spacingAndGlyphs">No Service Select</text></svg>
<text x="3.96" y="462.90" font-size="19.57" fill="#ffffff" textLength="53.16" lengthAdjust="spacingAndGlyphs">DR P1</text>
<text x="3.91" y="494.50" font-size="19.57" fill="#ffffff" textLength="54.72" lengthAdjust="spacingAndGlyphs">DR P2</text>
<text x="3.92" y="526.10" font-size="19.57" fill="#ffffff" textLength="54.53" lengthAdjust="spacingAndGlyphs">DR P3</text>
<text x="3.84" y="557.70" font-size="19.57" fill="#ffffff" textLength="146.29" lengthAdjust="spacingAndGlyphs">DR P4 Bornholm</text>
<text x="3.91" y="589.30" font-size="19.57" fill="#ffffff" textLength="91.21" lengthAdjust="spacingAndGlyphs">DR P4 Fyn</text>
<text x="3.87" y="620.90" font-size="19.57" fill="#ffffff" textLength="159.74" lengthAdjust="spacingAndGlyphs">DR P4 København</text>
<text x="3.88" y="652.50" font-size="19.57" fill="#ffffff" textLength="135.45" lengthAdjust="spacingAndGlyphs">DR P4 Sjælland</text>
<text x="3.92" y="684.10" font-size="19.57" fill="#ffffff" textLength="91.71" lengthAdjust="spacingAndGlyphs">DR P4 Syd</text>
<text x="3.84" y="715.70" font-size="19.57" fill="#ffffff" textLength="146.29" lengthAdjust="spacingAndGlyphs">DR P5 Bornholm</text>
<text x="3.91" y="747.30" font-size="19.57" fill="#ffffff" textLength="91.21" lengthAdjust="spacingAndGlyphs">DR P5 Fyn</text>
<text x="3.87" y="778.90" font-size="19.57" fill="#ffffff" textLength="159.74" lengthAdjust="spacingAndGlyphs">DR P5 København</text>
<text x="3.88" y="810.50" font-size="19.57" fill="#ffffff" textLength="135.45" lengthAdjust="spacingAndGlyphs">DR P5 Sjælland</text>
<text x="3.92" y="842.10" font-size="19.57" fill="#ffffff" textLength="91.71" lengthAdjust="spacingAndGlyphs">DR P5 Syd</text>
<text x="3.90" y="873.70" font-size="19.57" fill="#ffffff" textLength="99.10" lengthAdjust="spacingAndGlyphs">DR P6 Beat</text>
<text x="3.95" y="905.30" font-size="19.57" fill="#ffffff" textLength="95.95" lengthAdjust="spacingAndGlyphs">DR P8 Jazz</text>
<text x="3.88" y="936.90" font-size="19.57" fill="#ffffff" textLength="58.20" lengthAdjust="spacingAndGlyphs">R4DIO</text>
<text x="224.89" y="424.80" font-size="25.80" fill="#ffffff" textLength="180.60" lengthAdjust="spacingAndGlyphs">Service Quality</text>
<text x="231.66" y="473.50" font-size="17.97" fill="#ffffff" textLength="69.97" lengthAdjust="spacingAndGlyphs">SNR (dB)</text>
<rect x="381.8" y="450.5" width="50.1" height="31.3" fill="#858585"/>
<rect x="381.8" y="450.5" width="16.099999999999966" height="31.3" fill="#ffa500"/>
<text x="393.61" y="471.80" font-size="13.77" fill="#ffffff" textLength="27.20" lengthAdjust="spacingAndGlyphs">11.5</text>
<text x="231.07" y="512.05" font-size="17.97" fill="#ffffff" textLength="79.17" lengthAdjust="spacingAndGlyphs">FIC (ok %)</text>
<rect x="381.8" y="489.05" width="50.1" height="31.3" fill="#858585"/>
<rect x="381.8" y="489.05" width="50.099999999999966" height="31.3" fill="#008000"/>
<text x="394.90" y="510.35" font-size="13.77" fill="#e8ffd8" textLength="24.46" lengthAdjust="spacingAndGlyphs">100</text>
<text x="231.09" y="550.60" font-size="17.97" fill="#ffffff" textLength="74.72" lengthAdjust="spacingAndGlyphs">RS (ok %)</text>
<rect x="381.8" y="527.6" width="50.1" height="31.3" fill="#858585"/>
<text x="230.97" y="589.15" font-size="17.97" fill="#ffffff" textLength="95.50" lengthAdjust="spacingAndGlyphs">Null Symbol</text>
<rect x="381.8" y="566.15" width="50.1" height="31.3" fill="#858585"/>
<rect x="381.8" y="566.15" width="50.099999999999966" height="31.3" fill="#008000"/>
<text x="231.63" y="627.70" font-size="17.97" fill="#ffffff" textLength="133.63" lengthAdjust="spacingAndGlyphs">SymbolTime (ms)</text>
<rect x="381.8" y="604.7" width="50.1" height="31.3" fill="#858585"/>
<rect x="381.8" y="604.7" width="8.0" height="31.3" fill="#008000"/>
<text x="392.92" y="626.00" font-size="13.77" fill="#ffffff" textLength="28.23" lengthAdjust="spacingAndGlyphs">0.24</text>
<text x="231.04" y="666.25" font-size="17.97" fill="#ffffff" textLength="125.11" lengthAdjust="spacingAndGlyphs">FrameTime (ms)</text>
<rect x="381.8" y="643.25" width="50.1" height="31.3" fill="#858585"/>
<rect x="381.8" y="643.25" width="32.0" height="31.3" fill="#008000"/>
<text x="392.87" y="664.55" font-size="13.77" fill="#ffffff" textLength="27.28" lengthAdjust="spacingAndGlyphs">96.1</text>
<path d="M460.3 439 L460.3 407.4 Q460.3 403.4 464.3 403.4 L521.4 403.4 Q533.4 403.4 533.4 415.4 L533.4 439 Z" fill="#878787" stroke="#7d8a96" stroke-width="1"/>
<path d="M589.7 439 L589.7 407.4 Q589.7 403.4 593.7 403.4 L664.7 403.4 Q676.7 403.4 676.7 415.4 L676.7 439 Z" fill="#878787" stroke="#7d8a96" stroke-width="1"/>
<path d="M678.3 439 L678.3 407.4 Q678.3 403.4 682.3 403.4 L738.3 403.4 Q750.3 403.4 750.3 415.4 L750.3 439 Z" fill="#878787" stroke="#7d8a96" stroke-width="1"/>
<path d="M751.8 439 L751.8 407.4 Q751.8 403.4 755.8 403.4 L845.4 403.4 Q857.4 403.4 857.4 415.4 L857.4 439 Z" fill="#878787" stroke="#7d8a96" stroke-width="1"/>
<path d="M535.3 439 L535.3 406.8 Q535.3 402.8 539.3 402.8 L576.7 402.8 Q588.7 402.8 588.7 414.8 L588.7 439 Z" fill="#1a5885" stroke="#5a86aa" stroke-width="1"/>
<rect x="450.5" y="438" width="465.5" height="20" fill="#1a5885"/>
<text x="474.91" y="430.00" font-size="21.74" fill="#d8d8d8" textLength="43.95" lengthAdjust="spacingAndGlyphs">Sync</text>
<text x="550.89" y="430.00" font-size="21.74" fill="#ffffff" textLength="23.66" lengthAdjust="spacingAndGlyphs">TII</text>
<text x="606.30" y="430.00" font-size="21.74" fill="#d8d8d8" textLength="55.93" lengthAdjust="spacingAndGlyphs">Audio</text>
<text x="694.90" y="430.00" font-size="21.74" fill="#d8d8d8" textLength="40.11" lengthAdjust="spacingAndGlyphs">AAC</text>
<text x="765.92" y="430.00" font-size="21.74" fill="#d8d8d8" textLength="75.38" lengthAdjust="spacingAndGlyphs">Options</text>
<circle cx="499.2" cy="456.2" r="5.2" fill="#ff1010"/>
<rect x="530.2" y="450.1" width="10.6" height="11.9" fill="#0d2a44"/>
<rect x="468.1" y="473.6" width="310" height="1.2" fill="#8fb0cc"/>
<rect x="789.8" y="438" width="1" height="38" fill="#4a7aa2"/>
<text x="797.25" y="476.40" font-size="20.87" fill="#ffffff" textLength="77.31" lengthAdjust="spacingAndGlyphs">Threshold</text>
<text x="467.29" y="514.10" font-size="20.00" fill="#ffffff" textLength="60.93" lengthAdjust="spacingAndGlyphs">Pattern</text>
<text x="551.01" y="514.10" font-size="20.00" fill="#ffffff" textLength="59.82" lengthAdjust="spacingAndGlyphs">MainId</text>
<text x="634.25" y="514.10" font-size="20.00" fill="#ffffff" textLength="49.13" lengthAdjust="spacingAndGlyphs">SubId</text>
<text x="707.14" y="514.10" font-size="20.00" fill="#ffffff" textLength="72.21" lengthAdjust="spacingAndGlyphs">Strength</text>
<rect x="468.1" y="519" width="310" height="1.2" fill="#8fb0cc"/>
<text x="469.68" y="551.50" font-size="19.86" fill="#ffffff" textLength="38.90" lengthAdjust="spacingAndGlyphs">0x1b</text>
<text x="553.45" y="551.50" font-size="19.86" fill="#ffffff" textLength="11.73" lengthAdjust="spacingAndGlyphs">2</text>
<text x="636.93" y="551.50" font-size="19.86" fill="#ffffff" textLength="20.24" lengthAdjust="spacingAndGlyphs">10</text>
<text x="709.62" y="551.50" font-size="19.86" fill="#ffffff" textLength="33.31" lengthAdjust="spacingAndGlyphs">0.80</text>
<text x="469.67" y="583.50" font-size="19.57" fill="#ffffff" textLength="39.37" lengthAdjust="spacingAndGlyphs">0x1d</text>
<text x="553.69" y="583.50" font-size="19.57" fill="#ffffff" textLength="11.24" lengthAdjust="spacingAndGlyphs">3</text>
<text x="636.93" y="583.50" font-size="19.57" fill="#ffffff" textLength="20.35" lengthAdjust="spacingAndGlyphs">13</text>
<text x="709.65" y="583.50" font-size="19.57" fill="#ffffff" textLength="31.81" lengthAdjust="spacingAndGlyphs">0.61</text>
<rect x="830.4" y="500.3" width="2.8" height="133" fill="#e0e6ea"/>
<circle cx="831.8" cy="641.5" r="8.6" fill="#1a1a1a"/>
<circle cx="831.8" cy="641.1" r="8" fill="url(#thumb)"/>
<text x="814.23" y="674.70" font-size="18.55" fill="#ffffff" textLength="32.84" lengthAdjust="spacingAndGlyphs">0.02</text>
<text x="1286.21" y="412.20" font-size="17.25" fill="#ffffff" textLength="266.59" lengthAdjust="spacingAndGlyphs">Channel Impulse Response (CIR)</text>
<path d="M1874.3 400.6 L1889.2 400.6 L1881.7 413.6 Z" fill="none" stroke="#e8eef4" stroke-width="0.95"/>
<circle cx="942.8" cy="442.1" r="8.4" fill="#e4e4e4"/>
<text x="954.87" y="448.20" font-size="15.80" fill="#ffffff" textLength="43.79" lengthAdjust="spacingAndGlyphs">Freeze</text>
<circle cx="1031.8" cy="442.1" r="8.4" fill="#e4e4e4"/>
<text x="1043.85" y="448.20" font-size="15.80" fill="#ffffff" textLength="57.74" lengthAdjust="spacingAndGlyphs">Gradient</text>
<text x="939.92" y="499.70" font-size="17.54" fill="#ffffff" textLength="112.12" lengthAdjust="spacingAndGlyphs">Smoothing Level</text>
<rect x="942.8" y="510" width="1.4" height="4.2" fill="#cfcfcf"/>
<rect x="959.05" y="510" width="1.4" height="4.2" fill="#cfcfcf"/>
<rect x="975.3" y="510" width="1.4" height="4.2" fill="#cfcfcf"/>
<rect x="991.55" y="510" width="1.4" height="4.2" fill="#cfcfcf"/>
<rect x="1007.8" y="510" width="1.4" height="4.2" fill="#cfcfcf"/>
<rect x="1024.05" y="510" width="1.4" height="4.2" fill="#cfcfcf"/>
<rect x="1040.3" y="510" width="1.4" height="4.2" fill="#cfcfcf"/>
<rect x="1056.55" y="510" width="1.4" height="4.2" fill="#cfcfcf"/>
<rect x="1072.8" y="510" width="1.4" height="4.2" fill="#cfcfcf"/>
<rect x="1089.05" y="510" width="1.4" height="4.2" fill="#cfcfcf"/>
<rect x="1105.3" y="510" width="1.4" height="4.2" fill="#cfcfcf"/>
<rect x="934.8" y="521.5" width="172.2" height="2.7" fill="#e8e8e8"/>
<circle cx="1024.7" cy="523.5999999999999" r="8.6" fill="#202020"/>
<circle cx="1024.7" cy="522.8" r="8" fill="url(#thumb)"/>
<text x="940.15" y="567.50" font-size="17.10" fill="#ffffff" textLength="52.87" lengthAdjust="spacingAndGlyphs">Zoom X</text>
<rect x="934.8" y="583.8" width="172.2" height="2.7" fill="#e8e8e8"/>
<circle cx="943.2" cy="585.9" r="8.6" fill="#202020"/>
<circle cx="943.2" cy="585.1" r="8" fill="url(#thumb)"/>
<text x="940.15" y="629.30" font-size="16.67" fill="#ffffff" textLength="51.99" lengthAdjust="spacingAndGlyphs">Zoom Y</text>
<rect x="934.8" y="646.2" width="172.2" height="2.7" fill="#e8e8e8"/>
<circle cx="943.2" cy="648.3" r="8.6" fill="#202020"/>
<circle cx="943.2" cy="647.5" r="8" fill="url(#thumb)"/>
<svg x="922" y="419.5" width="200" height="274.5" overflow="hidden"><text x="18.45" y="272.80" font-size="16.38" fill="#ffffff" textLength="40.10" lengthAdjust="spacingAndGlyphs">x-Axis</text></svg>
<rect x="1114.7" y="422" width="5.6" height="205" rx="2.8" fill="#9a9a9a"/>
<rect x="1128" y="419.5" width="1" height="274.5" fill="#1c1c1c"/>
<rect x="1367.6" y="440.1" width="29.7" height="195.60000000000002" fill="#444444"/>
<line x1="1273.3" y1="440.1" x2="1273.3" y2="635.7" stroke="#8e8e8e" stroke-width="1.2"/>
<line x1="1314.6599999999999" y1="440.1" x2="1314.6599999999999" y2="635.7" stroke="#8e8e8e" stroke-width="1.2"/>
<line x1="1356.02" y1="440.1" x2="1356.02" y2="635.7" stroke="#8e8e8e" stroke-width="1.2"/>
<line x1="1438.74" y1="440.1" x2="1438.74" y2="635.7" stroke="#8e8e8e" stroke-width="1.2"/>
<line x1="1480.1" y1="440.1" x2="1480.1" y2="635.7" stroke="#8e8e8e" stroke-width="1.2"/>
<line x1="1521.46" y1="440.1" x2="1521.46" y2="635.7" stroke="#8e8e8e" stroke-width="1.2"/>
<line x1="1562.82" y1="440.1" x2="1562.82" y2="635.7" stroke="#8e8e8e" stroke-width="1.2"/>
<line x1="1604.1799999999998" y1="440.1" x2="1604.1799999999998" y2="635.7" stroke="#8e8e8e" stroke-width="1.2"/>
<line x1="1645.54" y1="440.1" x2="1645.54" y2="635.7" stroke="#8e8e8e" stroke-width="1.2"/>
<line x1="1686.9" y1="440.1" x2="1686.9" y2="635.7" stroke="#8e8e8e" stroke-width="1.2"/>
<line x1="1728.26" y1="440.1" x2="1728.26" y2="635.7" stroke="#8e8e8e" stroke-width="1.2"/>
<line x1="1769.62" y1="440.1" x2="1769.62" y2="635.7" stroke="#8e8e8e" stroke-width="1.2"/>
<line x1="1810.98" y1="440.1" x2="1810.98" y2="635.7" stroke="#8e8e8e" stroke-width="1.2"/>
<line x1="1852.34" y1="440.1" x2="1852.34" y2="635.7" stroke="#8e8e8e" stroke-width="1.2"/>
<line x1="1244.8" y1="479.22" x2="1864.2" y2="479.22" stroke="#8e8e8e" stroke-width="1.2"/>
<line x1="1244.8" y1="518.34" x2="1864.2" y2="518.34" stroke="#8e8e8e" stroke-width="1.2"/>
<line x1="1244.8" y1="557.46" x2="1864.2" y2="557.46" stroke="#8e8e8e" stroke-width="1.2"/>
<line x1="1244.8" y1="596.58" x2="1864.2" y2="596.58" stroke="#8e8e8e" stroke-width="1.2"/>
<rect x="1244.8" y="440.1" width="619.4000000000001" height="195.60000000000002" fill="none" stroke="#999" stroke-width="1.6"/>
<line x1="1244.8" y1="440.1" x2="1244.8" y2="635.7" stroke="#d03030" stroke-width="2"/>
<line x1="1397.7" y1="440.1" x2="1397.7" y2="635.7" stroke="#e8e830" stroke-width="1.2" stroke-dasharray="2,2"/>
<polyline points="1246.0,528.4 1247.0,531.7 1248.0,539.7 1249.0,544.2 1250.0,541.3 1251.0,541.8 1252.0,553.1 1253.0,565.3 1254.0,566.4 1255.0,559.6 1256.0,557.4 1257.0,565.1 1258.0,575.2 1259.0,580.2 1260.0,580.9 1261.0,577.9 1262.0,568.8 1263.0,556.3 1264.0,548.6 1265.0,548.8 1266.0,552.4 1267.0,553.4 1268.0,551.2 1269.0,551.2 1270.0,552.8 1271.0,551.3 1272.0,550.3 1273.0,550.9 1274.0,547.2 1275.0,538.6 1276.0,532.7 1277.0,535.4 1278.0,542.3 1279.0,544.7 1280.0,541.9 1281.0,539.1 1282.0,539.7 1283.0,542.9 1284.0,547.1 1285.0,550.3 1286.0,548.4 1287.0,541.1 1288.0,538.0 1289.0,547.5 1290.0,564.4 1291.0,577.0 1292.0,577.5 1293.0,566.4 1294.0,553.7 1295.0,549.8 1296.0,552.2 1297.0,551.8 1298.0,551.9 1299.0,559.1 1300.0,565.4 1301.0,565.2 1302.0,560.0 1303.0,549.2 1304.0,539.5 1305.0,539.0 1306.0,545.2 1307.0,555.9 1308.0,570.4 1309.0,578.4 1310.0,573.8 1311.0,567.8 1312.0,567.5 1313.0,564.0 1314.0,557.1 1315.0,558.4 1316.0,566.2 1317.0,566.8 1318.0,560.4 1319.0,557.7 1320.0,558.0 1321.0,558.2 1322.0,560.3 1323.0,562.5 1324.0,561.2 1325.0,555.9 1326.0,550.9 1327.0,552.7 1328.0,559.7 1329.0,565.2 1330.0,565.9 1331.0,561.5 1332.0,562.4 1333.0,573.1 1334.0,573.5 1335.0,557.3 1336.0,547.7 1337.0,552.5 1338.0,561.0 1339.0,567.8 1340.0,569.2 1341.0,567.0 1342.0,567.9 1343.0,568.1 1344.0,563.4 1345.0,560.8 1346.0,563.9 1347.0,565.9 1348.0,563.1 1349.0,557.8 1350.0,551.9 1351.0,547.7 1352.0,545.3 1353.0,540.6 1354.0,534.3 1355.0,531.8 1356.0,538.6 1357.0,551.9 1358.0,560.3 1359.0,558.3 1360.0,550.3 1361.0,548.9 1362.0,557.5 1363.0,561.3 1364.0,556.1 1365.0,552.0 1366.0,552.1 1367.0,552.1 1368.0,552.1 1369.0,555.7 1370.0,557.2 1371.0,553.0 1372.0,552.7 1373.0,558.4 1374.0,561.2 1375.0,559.0 1376.0,558.4 1377.0,564.4 1378.0,572.9 1379.0,571.4 1380.0,560.8 1381.0,558.6 1382.0,567.2 1383.0,572.4 1384.0,571.2 1385.0,569.6 1386.0,563.8 1387.0,552.9 1388.0,548.3 1389.0,551.3 1390.0,552.9 1391.0,551.3 1392.0,550.2 1393.0,549.4 1394.0,548.1 1395.0,546.8 1396.0,533.9 1397.0,498.8 1398.0,471.5 1399.0,483.7 1400.0,519.3 1401.0,544.6 1402.0,551.9 1403.0,554.2 1404.0,555.5 1405.0,554.1 1406.0,553.0 1407.0,554.0 1408.0,556.8 1409.0,559.7 1410.0,561.6 1411.0,561.0 1412.0,555.9 1413.0,548.7 1414.0,544.1 1415.0,542.8 1416.0,542.6 1417.0,543.9 1418.0,547.9 1419.0,553.9 1420.0,561.5 1421.0,567.2 1422.0,566.4 1423.0,561.1 1424.0,560.0 1425.0,566.0 1426.0,570.0 1427.0,566.8 1428.0,563.6 1429.0,565.9 1430.0,569.7 1431.0,572.5 1432.0,579.0 1433.0,583.4 1434.0,575.1 1435.0,563.5 1436.0,558.2 1437.0,551.7 1438.0,544.9 1439.0,546.0 1440.0,552.6 1441.0,556.3 1442.0,550.6 1443.0,543.2 1444.0,546.2 1445.0,551.1 1446.0,549.8 1447.0,551.8 1448.0,561.4 1449.0,569.6 1450.0,571.1 1451.0,570.8 1452.0,573.9 1453.0,578.1 1454.0,578.3 1455.0,572.3 1456.0,560.4 1457.0,545.4 1458.0,534.9 1459.0,529.0 1460.0,518.2 1461.0,505.1 1462.0,499.8 1463.0,511.0 1464.0,530.4 1465.0,539.3 1466.0,540.2 1467.0,540.1 1468.0,537.0 1469.0,534.0 1470.0,536.6 1471.0,542.6 1472.0,551.1 1473.0,552.2 1474.0,551.0 1475.0,559.6 1476.0,570.2 1477.0,576.2 1478.0,581.2 1479.0,584.6 1480.0,582.9 1481.0,572.3 1482.0,553.7 1483.0,540.5 1484.0,539.3 1485.0,542.4 1486.0,550.8 1487.0,560.8 1488.0,560.3 1489.0,552.4 1490.0,544.8 1491.0,539.0 1492.0,538.1 1493.0,543.5 1494.0,553.7 1495.0,562.3 1496.0,561.1 1497.0,556.2 1498.0,557.4 1499.0,554.9 1500.0,543.6 1501.0,540.7 1502.0,552.1 1503.0,562.0 1504.0,559.8 1505.0,552.9 1506.0,551.8 1507.0,553.7 1508.0,555.1 1509.0,556.2 1510.0,551.3 1511.0,541.3 1512.0,535.8 1513.0,535.9 1514.0,538.0 1515.0,542.5 1516.0,547.5 1517.0,548.2 1518.0,544.8 1519.0,534.3 1520.0,516.3 1521.0,506.7 1522.0,512.0 1523.0,526.8 1524.0,543.4 1525.0,551.4 1526.0,548.7 1527.0,543.8 1528.0,544.4 1529.0,548.7 1530.0,551.9 1531.0,548.4 1532.0,533.5 1533.0,516.8 1534.0,513.3 1535.0,525.3 1536.0,542.4 1537.0,550.4 1538.0,551.5 1539.0,555.3 1540.0,562.8 1541.0,572.0 1542.0,575.8 1543.0,569.3 1544.0,559.6 1545.0,555.1 1546.0,559.1 1547.0,565.4 1548.0,564.5 1549.0,557.8 1550.0,553.1 1551.0,554.1 1552.0,555.9 1553.0,552.3 1554.0,544.9 1555.0,537.2 1556.0,534.0 1557.0,536.6 1558.0,541.1 1559.0,538.1 1560.0,521.2 1561.0,498.5 1562.0,489.3 1563.0,508.7 1564.0,534.7 1565.0,547.3 1566.0,557.0 1567.0,566.7 1568.0,568.1 1569.0,560.3 1570.0,552.7 1571.0,550.0 1572.0,548.1 1573.0,546.4 1574.0,545.6 1575.0,545.1 1576.0,546.4 1577.0,546.3 1578.0,543.3 1579.0,545.3 1580.0,553.3 1581.0,559.4 1582.0,559.0 1583.0,553.9 1584.0,549.6 1585.0,550.9 1586.0,554.4 1587.0,552.6 1588.0,544.6 1589.0,538.9 1590.0,544.4 1591.0,559.2 1592.0,569.5 1593.0,571.8 1594.0,572.8 1595.0,568.3 1596.0,555.7 1597.0,546.8 1598.0,546.6 1599.0,549.3 1600.0,550.5 1601.0,550.5 1602.0,551.0 1603.0,550.7 1604.0,548.2 1605.0,542.5 1606.0,534.5 1607.0,534.7 1608.0,549.7 1609.0,565.6 1610.0,567.8 1611.0,562.8 1612.0,565.4 1613.0,575.0 1614.0,575.8 1615.0,562.1 1616.0,547.2 1617.0,540.2 1618.0,542.3 1619.0,550.6 1620.0,556.9 1621.0,558.0 1622.0,556.3 1623.0,555.8 1624.0,558.3 1625.0,558.0 1626.0,552.5 1627.0,546.9 1628.0,545.5 1629.0,548.4 1630.0,551.0 1631.0,549.4 1632.0,546.6 1633.0,547.9 1634.0,553.9 1635.0,558.2 1636.0,558.1 1637.0,555.8 1638.0,552.1 1639.0,548.1 1640.0,545.1 1641.0,544.8 1642.0,549.2 1643.0,553.5 1644.0,554.2 1645.0,555.5 1646.0,555.3 1647.0,548.2 1648.0,542.1 1649.0,543.4 1650.0,544.6 1651.0,541.9 1652.0,541.5 1653.0,545.8 1654.0,551.4 1655.0,555.0 1656.0,555.8 1657.0,557.4 1658.0,558.5 1659.0,556.0 1660.0,557.1 1661.0,562.5 1662.0,565.0 1663.0,564.7 1664.0,562.7 1665.0,559.5 1666.0,558.7 1667.0,561.0 1668.0,562.0 1669.0,556.2 1670.0,551.1 1671.0,558.6 1672.0,571.6 1673.0,576.3 1674.0,574.1 1675.0,567.4 1676.0,557.2 1677.0,550.5 1678.0,549.5 1679.0,551.7 1680.0,559.0 1681.0,571.2 1682.0,578.8 1683.0,571.9 1684.0,557.4 1685.0,551.5 1686.0,557.8 1687.0,563.9 1688.0,562.6 1689.0,559.0 1690.0,554.8 1691.0,549.7 1692.0,548.2 1693.0,548.9 1694.0,548.4 1695.0,550.9 1696.0,557.3 1697.0,560.5 1698.0,562.0 1699.0,565.5 1700.0,563.0 1701.0,556.0 1702.0,557.4 1703.0,564.8 1704.0,567.7 1705.0,567.5 1706.0,569.7 1707.0,570.5 1708.0,565.6 1709.0,562.2 1710.0,563.7 1711.0,563.4 1712.0,561.4 1713.0,562.2 1714.0,564.5 1715.0,564.7 1716.0,563.8 1717.0,567.2 1718.0,571.4 1719.0,567.1 1720.0,558.2 1721.0,556.2 1722.0,560.5 1723.0,564.3 1724.0,565.8 1725.0,564.4 1726.0,561.3 1727.0,560.1 1728.0,560.1 1729.0,554.9 1730.0,546.0 1731.0,545.3 1732.0,553.3 1733.0,560.9 1734.0,567.9 1735.0,574.7 1736.0,573.8 1737.0,564.4 1738.0,558.4 1739.0,562.1 1740.0,568.4 1741.0,568.3 1742.0,560.5 1743.0,554.4 1744.0,559.4 1745.0,569.2 1746.0,569.5 1747.0,559.1 1748.0,545.6 1749.0,535.2 1750.0,533.7 1751.0,540.2 1752.0,546.2 1753.0,549.2 1754.0,550.5 1755.0,547.5 1756.0,542.5 1757.0,541.7 1758.0,544.9 1759.0,552.5 1760.0,563.5 1761.0,571.6 1762.0,573.9 1763.0,571.0 1764.0,566.6 1765.0,568.3 1766.0,574.7 1767.0,574.7 1768.0,566.5 1769.0,561.3 1770.0,563.5 1771.0,567.5 1772.0,566.1 1773.0,558.3 1774.0,551.3 1775.0,551.4 1776.0,556.3 1777.0,558.0 1778.0,554.8 1779.0,554.4 1780.0,563.4 1781.0,579.3 1782.0,592.8 1783.0,596.5 1784.0,589.4 1785.0,575.3 1786.0,563.9 1787.0,560.0 1788.0,556.4 1789.0,551.6 1790.0,548.5 1791.0,544.6 1792.0,542.7 1793.0,546.1 1794.0,552.8 1795.0,560.1 1796.0,562.7 1797.0,560.7 1798.0,559.0 1799.0,557.5 1800.0,557.7 1801.0,564.0 1802.0,571.9 1803.0,571.9 1804.0,564.2 1805.0,559.8 1806.0,564.2 1807.0,567.7 1808.0,560.6 1809.0,548.4 1810.0,543.0 1811.0,544.5 1812.0,546.4 1813.0,550.1 1814.0,559.2 1815.0,567.2 1816.0,566.5 1817.0,560.2 1818.0,554.9 1819.0,553.1 1820.0,554.1 1821.0,556.0 1822.0,557.7 1823.0,560.8 1824.0,565.1 1825.0,566.7 1826.0,566.5 1827.0,565.6 1828.0,562.2 1829.0,556.1 1830.0,550.2 1831.0,548.0 1832.0,547.4 1833.0,543.1 1834.0,538.6 1835.0,542.4 1836.0,551.5 1837.0,554.2 1838.0,550.4 1839.0,548.8 1840.0,553.3 1841.0,561.7 1842.0,568.8 1843.0,572.2 1844.0,572.5 1845.0,570.0 1846.0,567.5 1847.0,565.9 1848.0,562.8 1849.0,562.3 1850.0,566.7 1851.0,568.6 1852.0,567.8 1853.0,567.1 1854.0,560.6 1855.0,551.5 1856.0,551.5 1857.0,560.0 1858.0,569.6 1859.0,578.5 1860.0,584.8 1861.0,583.2 1862.0,574.4" fill="none" stroke="#f2f2f2" stroke-width="1.4" stroke-linejoin="round"/>
<circle cx="1398.2" cy="471" r="5.2" fill="#f0f000"/>
<circle cx="1461.9" cy="500.7" r="5.2" fill="#1aa0e0"/>
<circle cx="1521.1" cy="506.5" r="5.2" fill="#7a30d8"/>
<circle cx="1561.8" cy="486" r="5.2" fill="#e81010"/>
<text x="1211.42" y="445.30" font-size="16.67" fill="#ffffff">0.0</text>
<text x="1196.58" y="484.42" font-size="16.67" fill="#ffffff">-10.0</text>
<text x="1196.58" y="523.54" font-size="16.67" fill="#ffffff">-20.0</text>
<text x="1196.58" y="562.66" font-size="16.67" fill="#ffffff">-30.0</text>
<text x="1196.58" y="601.78" font-size="16.67" fill="#ffffff">-40.0</text>
<text x="1196.58" y="640.90" font-size="16.67" fill="#ffffff">-50.0</text>
<text x="1262.12" y="653.40" font-size="15.36" fill="#ffffff">-60</text>
<text x="1303.48" y="653.40" font-size="15.36" fill="#ffffff">-40</text>
<text x="1344.84" y="653.40" font-size="15.36" fill="#ffffff">-20</text>
<text x="1393.08" y="653.40" font-size="15.36" fill="#ffffff">0</text>
<text x="1430.10" y="653.40" font-size="15.36" fill="#ffffff">20</text>
<text x="1471.69" y="653.40" font-size="15.36" fill="#ffffff">40</text>
<text x="1512.82" y="653.40" font-size="15.36" fill="#ffffff">60</text>
<text x="1554.22" y="653.40" font-size="15.36" fill="#ffffff">80</text>
<text x="1591.08" y="653.40" font-size="15.36" fill="#ffffff">100</text>
<text x="1632.44" y="653.40" font-size="15.36" fill="#ffffff">120</text>
<text x="1673.80" y="653.40" font-size="15.36" fill="#ffffff">140</text>
<text x="1715.16" y="653.40" font-size="15.36" fill="#ffffff">160</text>
<text x="1756.52" y="653.40" font-size="15.36" fill="#ffffff">180</text>
<text x="1798.08" y="653.40" font-size="15.36" fill="#ffffff">200</text>
<text x="1839.44" y="653.40" font-size="15.36" fill="#ffffff">220</text>
<text x="1460.22" y="677.00" font-size="16.23" fill="#ffffff" textLength="189.10" lengthAdjust="spacingAndGlyphs">Distance Difference (km)</text>
<g transform="rotate(-90)"><text x="-595.32" y="1174.60" font-size="17.25" fill="#ffffff" font-weight="bold" textLength="113.75" lengthAdjust="spacingAndGlyphs">Magnitude (dB)</text></g>
<text x="1375.85" y="717.90" font-size="18.84" fill="#ffffff" textLength="87.97" lengthAdjust="spacingAndGlyphs">TII Carriers</text>
<path d="M1874.3 705.3 L1889.2 705.3 L1881.7 718.3 Z" fill="none" stroke="#e8eef4" stroke-width="0.95"/>
<line x1="1082.3" y1="744" x2="1082.3" y2="908.4" stroke="#8e8e8e" stroke-width="1.2"/>
<line x1="1162.72" y1="744" x2="1162.72" y2="908.4" stroke="#8e8e8e" stroke-width="1.2"/>
<line x1="1243.1399999999999" y1="744" x2="1243.1399999999999" y2="908.4" stroke="#8e8e8e" stroke-width="1.2"/>
<line x1="1323.56" y1="744" x2="1323.56" y2="908.4" stroke="#8e8e8e" stroke-width="1.2"/>
<line x1="1403.98" y1="744" x2="1403.98" y2="908.4" stroke="#8e8e8e" stroke-width="1.2"/>
<line x1="1484.4" y1="744" x2="1484.4" y2="908.4" stroke="#8e8e8e" stroke-width="1.2"/>
<line x1="1564.82" y1="744" x2="1564.82" y2="908.4" stroke="#8e8e8e" stroke-width="1.2"/>
<line x1="1645.24" y1="744" x2="1645.24" y2="908.4" stroke="#8e8e8e" stroke-width="1.2"/>
<line x1="1725.6599999999999" y1="744" x2="1725.6599999999999" y2="908.4" stroke="#8e8e8e" stroke-width="1.2"/>
<line x1="1806.08" y1="744" x2="1806.08" y2="908.4" stroke="#8e8e8e" stroke-width="1.2"/>
<line x1="1032.6" y1="776.88" x2="1855.7" y2="776.88" stroke="#8e8e8e" stroke-width="1.2"/>
<line x1="1032.6" y1="809.76" x2="1855.7" y2="809.76" stroke="#8e8e8e" stroke-width="1.2"/>
<line x1="1032.6" y1="842.64" x2="1855.7" y2="842.64" stroke="#8e8e8e" stroke-width="1.2"/>
<line x1="1032.6" y1="875.52" x2="1855.7" y2="875.52" stroke="#8e8e8e" stroke-width="1.2"/>
<rect x="1032.6" y="744" width="823.1000000000001" height="164.39999999999998" fill="none" stroke="#999" stroke-width="1.6"/>
<line x1="1032.6" y1="909.5" x2="1855.7" y2="909.5" stroke="#aaaaaa" stroke-width="1.4"/>
<line x1="1032.6" y1="744" x2="1032.6" y2="909.4" stroke="#c83030" stroke-width="2"/>
<line x1="1135.5" y1="744" x2="1135.5" y2="908.4" stroke="#e8e820" stroke-width="2" stroke-dasharray="2,2.2"/>
<line x1="1290.2" y1="744" x2="1290.2" y2="908.4" stroke="#e8e820" stroke-width="2" stroke-dasharray="2,2.2"/>
<line x1="1444.9" y1="744" x2="1444.9" y2="908.4" stroke="#e8e820" stroke-width="2" stroke-dasharray="2,2.2"/>
<line x1="1599.6" y1="744" x2="1599.6" y2="908.4" stroke="#e8e820" stroke-width="2" stroke-dasharray="2,2.2"/>
<line x1="1754.3" y1="744" x2="1754.3" y2="908.4" stroke="#e8e820" stroke-width="2" stroke-dasharray="2,2.2"/>
<rect x="1177.2" y="900.3" width="1.6" height="8.700000000000045" fill="#b0b0b0"/>
<rect x="1201.4" y="861.4" width="1.6" height="47.60000000000002" fill="#e8e8e8"/>
<rect x="1204.2" y="838.3" width="1.6" height="70.70000000000005" fill="#90d090"/>
<rect x="1220.6000000000001" y="853.3" width="1.6" height="55.700000000000045" fill="#e8e8e8"/>
<rect x="1223.5" y="828.2" width="1.6" height="80.79999999999995" fill="#90d090"/>
<rect x="1233.9" y="902.6" width="1.6" height="6.399999999999977" fill="#b0b0b0"/>
<rect x="1242.5" y="863.7" width="1.6" height="45.299999999999955" fill="#90d090"/>
<rect x="1259.5" y="845.5" width="1.6" height="63.5" fill="#e8e8e8"/>
<rect x="1272.5" y="859.4" width="1.6" height="49.60000000000002" fill="#d8d8d8"/>
<rect x="1277.7" y="897" width="1.6" height="12" fill="#b0b0b0"/>
<rect x="1279.1000000000001" y="821.9" width="1.6" height="87.10000000000002" fill="#e8e8e8"/>
<rect x="1281.7" y="840.6" width="1.6" height="68.39999999999998" fill="#90d090"/>
<rect x="1355.4" y="843.2" width="1.6" height="65.79999999999995" fill="#e8e8e8"/>
<rect x="1358.6000000000001" y="847" width="1.6" height="62" fill="#90d090"/>
<rect x="1375.6000000000001" y="896" width="1.6" height="13" fill="#e8e8e8"/>
<rect x="1377.9" y="898" width="1.6" height="11" fill="#90d090"/>
<rect x="1388.7" y="897.3" width="1.6" height="11.700000000000045" fill="#c0c0c0"/>
<rect x="1397.1000000000001" y="819.6" width="1.6" height="89.39999999999998" fill="#90d090"/>
<rect x="1413.2" y="895" width="1.6" height="14" fill="#c0c0c0"/>
<rect x="1413.8" y="744.7" width="1.6" height="164.29999999999995" fill="#f0f0f0"/>
<rect x="1433.3" y="744.7" width="1.6" height="164.29999999999995" fill="#f0f0f0"/>
<rect x="1435.9" y="844.1" width="1.6" height="64.89999999999998" fill="#90d090"/>
<rect x="1507.9" y="899" width="1.6" height="10" fill="#b0b0b0"/>
<rect x="1510.8" y="765.5" width="1.6" height="143.5" fill="#f0f0f0"/>
<rect x="1513.1000000000001" y="828.2" width="1.6" height="80.79999999999995" fill="#90d090"/>
<rect x="1530.4" y="800.3" width="1.6" height="108.70000000000005" fill="#f0f0f0"/>
<rect x="1533.0" y="824.8" width="1.6" height="84.20000000000005" fill="#90d090"/>
<rect x="1552.0" y="866.2" width="1.6" height="42.799999999999955" fill="#90d090"/>
<rect x="1569.0" y="839.2" width="1.6" height="69.79999999999995" fill="#f0f0f0"/>
<rect x="1588.3" y="855" width="1.6" height="54" fill="#e8e8e8"/>
<rect x="1590.6000000000001" y="834" width="1.6" height="75" fill="#90d090"/>
<rect x="1655.7" y="898" width="1.6" height="11" fill="#b0b0b0"/>
<rect x="1658.8" y="856.2" width="1.6" height="52.799999999999955" fill="#c8c8c8"/>
<rect x="1665.4" y="857.9" width="1.6" height="51.10000000000002" fill="#f0f0f0"/>
<rect x="1668.0" y="882.4" width="1.6" height="26.600000000000023" fill="#90d090"/>
<rect x="1684.5" y="896.8" width="1.6" height="12.200000000000045" fill="#e8e8e8"/>
<rect x="1686.7" y="897" width="1.6" height="12" fill="#b0b0b0"/>
<rect x="1688.5" y="891.6" width="1.6" height="17.399999999999977" fill="#90d090"/>
<rect x="1706.1000000000001" y="907" width="1.6" height="2" fill="#b0b0b0"/>
<rect x="1742.6000000000001" y="906" width="1.6" height="3" fill="#b0b0b0"/>
<rect x="1744.9" y="801.4" width="1.6" height="107.60000000000002" fill="#90d090"/>
<text x="997.79" y="749.00" font-size="15.80" fill="#ffffff">1.0</text>
<text x="997.87" y="781.88" font-size="15.80" fill="#ffffff">0.8</text>
<text x="997.87" y="814.76" font-size="15.80" fill="#ffffff">0.6</text>
<text x="997.71" y="847.64" font-size="15.80" fill="#ffffff">0.4</text>
<text x="998.03" y="880.52" font-size="15.80" fill="#ffffff">0.2</text>
<text x="997.79" y="913.40" font-size="15.80" fill="#ffffff">0.0</text>
<text x="1065.40" y="928.80" font-size="16.81" fill="#ffffff">-900</text>
<text x="1145.82" y="928.80" font-size="16.81" fill="#ffffff">-700</text>
<text x="1226.24" y="928.80" font-size="16.81" fill="#ffffff">-500</text>
<text x="1306.66" y="928.80" font-size="16.81" fill="#ffffff">-300</text>
<text x="1387.08" y="928.80" font-size="16.81" fill="#ffffff">-100</text>
<text x="1470.07" y="928.80" font-size="16.81" fill="#ffffff">100</text>
<text x="1550.78" y="928.80" font-size="16.81" fill="#ffffff">300</text>
<text x="1631.20" y="928.80" font-size="16.81" fill="#ffffff">500</text>
<text x="1711.54" y="928.80" font-size="16.81" fill="#ffffff">700</text>
<text x="1792.00" y="928.80" font-size="16.81" fill="#ffffff">900</text>
<text x="1393.46" y="952.60" font-size="16.23" fill="#ffffff" textLength="102.03" lengthAdjust="spacingAndGlyphs">TII Subcarrier</text>
<g transform="rotate(-90)"><text x="-865.20" y="976.40" font-size="17.97" fill="#ffffff" font-weight="bold" textLength="76.93" lengthAdjust="spacingAndGlyphs">Magnitude</text></g></svg></body></html>
